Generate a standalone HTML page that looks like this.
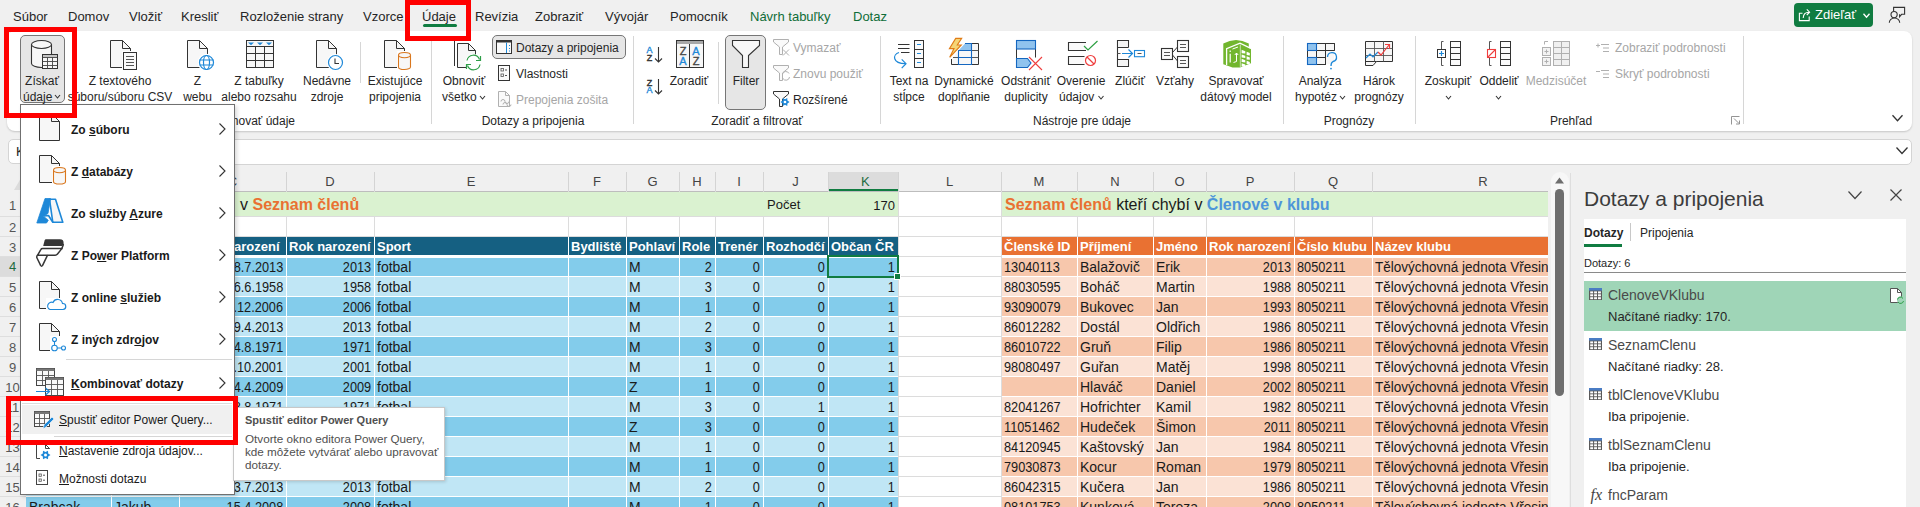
<!DOCTYPE html>
<html><head><meta charset="utf-8"><style>
html,body{margin:0;padding:0}
body{width:1920px;height:507px;overflow:hidden;position:relative;background:#f0f0f0;font-family:"Liberation Sans",sans-serif}
body>div{position:absolute}
.t{position:absolute;white-space:nowrap}
</style></head><body>
<div class="t" style="left:13px;top:8.0px;line-height:18px;font-size:13px;color:#262626;font-weight:400;">Súbor</div>
<div class="t" style="left:68px;top:8.0px;line-height:18px;font-size:13px;color:#262626;font-weight:400;">Domov</div>
<div class="t" style="left:129px;top:8.0px;line-height:18px;font-size:13px;color:#262626;font-weight:400;">Vložiť</div>
<div class="t" style="left:181px;top:8.0px;line-height:18px;font-size:13px;color:#262626;font-weight:400;">Kresliť</div>
<div class="t" style="left:240px;top:8.0px;line-height:18px;font-size:13px;color:#262626;font-weight:400;">Rozloženie strany</div>
<div class="t" style="left:363px;top:8.0px;line-height:18px;font-size:13px;color:#262626;font-weight:400;">Vzorce</div>
<div class="t" style="left:422px;top:8.0px;line-height:18px;font-size:13px;color:#262626;font-weight:400;">Údaje</div>
<div class="t" style="left:475px;top:8.0px;line-height:18px;font-size:13px;color:#262626;font-weight:400;">Revízia</div>
<div class="t" style="left:535px;top:8.0px;line-height:18px;font-size:13px;color:#262626;font-weight:400;">Zobraziť</div>
<div class="t" style="left:605px;top:8.0px;line-height:18px;font-size:13px;color:#262626;font-weight:400;">Vývojár</div>
<div class="t" style="left:670px;top:8.0px;line-height:18px;font-size:13px;color:#262626;font-weight:400;">Pomocník</div>
<div class="t" style="left:750px;top:8.0px;line-height:18px;font-size:13px;color:#0f6d38;font-weight:400;">Návrh tabuľky</div>
<div class="t" style="left:853px;top:8.0px;line-height:18px;font-size:13px;color:#0f6d38;font-weight:400;">Dotaz</div>
<div style="left:423px;top:24px;width:34px;height:3px;background:#107c41;border-radius:2px"></div>
<div style="left:1794px;top:3px;width:79px;height:24px;background:#107c41;border-radius:4px"></div>
<div class="t" style="left:1815px;top:6.0px;line-height:18px;font-size:13px;color:#fff;font-weight:400;">Zdieľať</div>
<div style="left:7px;top:31px;width:1905px;height:100px;background:#fff;border-radius:8px;box-shadow:0 1px 2px rgba(0,0,0,.18)"></div>
<div style="left:20px;top:35px;width:45px;height:68px;background:#e6e6e6;border:1px solid #767676;border-radius:5px;box-sizing:border-box"></div>
<div class="t" style="left:-258px;width:600px;text-align:center;top:73.0px;line-height:16px;font-size:12px;color:#262626;font-weight:400;">Získať</div>
<div class="t" style="left:23px;top:89.0px;line-height:16px;font-size:12px;color:#262626;font-weight:400;">údaje</div>
<div class="t" style="left:-180px;width:600px;text-align:center;top:73.0px;line-height:16px;font-size:12px;color:#262626;font-weight:400;">Z textového</div>
<div class="t" style="left:-180px;width:600px;text-align:center;top:89.0px;line-height:16px;font-size:12px;color:#262626;font-weight:400;">súboru/súboru CSV</div>
<div class="t" style="left:-102.5px;width:600px;text-align:center;top:73.0px;line-height:16px;font-size:12px;color:#262626;font-weight:400;">Z</div>
<div class="t" style="left:-102.5px;width:600px;text-align:center;top:89.0px;line-height:16px;font-size:12px;color:#262626;font-weight:400;">webu</div>
<div class="t" style="left:-41px;width:600px;text-align:center;top:73.0px;line-height:16px;font-size:12px;color:#262626;font-weight:400;">Z tabuľky</div>
<div class="t" style="left:-41px;width:600px;text-align:center;top:89.0px;line-height:16px;font-size:12px;color:#262626;font-weight:400;">alebo rozsahu</div>
<div class="t" style="left:27px;width:600px;text-align:center;top:73.0px;line-height:16px;font-size:12px;color:#262626;font-weight:400;">Nedávne</div>
<div class="t" style="left:27px;width:600px;text-align:center;top:89.0px;line-height:16px;font-size:12px;color:#262626;font-weight:400;">zdroje</div>
<div class="t" style="left:95px;width:600px;text-align:center;top:73.0px;line-height:16px;font-size:12px;color:#262626;font-weight:400;">Existujúce</div>
<div class="t" style="left:95px;width:600px;text-align:center;top:89.0px;line-height:16px;font-size:12px;color:#262626;font-weight:400;">pripojenia</div>
<div class="t" style="left:164px;width:600px;text-align:center;top:73.0px;line-height:16px;font-size:12px;color:#262626;font-weight:400;">Obnoviť</div>
<div class="t" style="left:442px;top:89.0px;line-height:16px;font-size:12px;color:#262626;font-weight:400;">všetko</div>
<div class="t" style="right:1625px;top:113.0px;line-height:16px;font-size:12px;color:#262626;font-weight:400;">Získať a transformovať údaje</div>
<div style="left:360px;top:42px;width:1px;height:41px;background:#d6d6d6"></div>
<div style="left:431px;top:41px;width:1px;height:83px;background:#d6d6d6"></div>
<div style="left:492px;top:35px;width:134px;height:24px;background:#e6e6e6;border:1px solid #767676;border-radius:5px;box-sizing:border-box"></div>
<div class="t" style="left:516px;top:40.0px;line-height:16px;font-size:12px;color:#262626;font-weight:400;">Dotazy a pripojenia</div>
<div class="t" style="left:516px;top:66.0px;line-height:16px;font-size:12px;color:#262626;font-weight:400;">Vlastnosti</div>
<div class="t" style="left:516px;top:92.0px;line-height:16px;font-size:12px;color:#a6a6a6;font-weight:400;">Prepojenia zošita</div>
<div class="t" style="left:233px;width:600px;text-align:center;top:113.0px;line-height:16px;font-size:12px;color:#262626;font-weight:400;">Dotazy a pripojenia</div>
<div style="left:633px;top:36px;width:1px;height:88px;background:#d6d6d6"></div>
<div class="t" style="left:389px;width:600px;text-align:center;top:73.0px;line-height:16px;font-size:12px;color:#262626;font-weight:400;">Zoradiť</div>
<div style="left:718px;top:42px;width:1px;height:62px;background:#d6d6d6"></div>
<div style="left:725px;top:35px;width:41px;height:75px;background:#e6e6e6;border:1px solid #767676;border-radius:5px;box-sizing:border-box"></div>
<div class="t" style="left:446px;width:600px;text-align:center;top:73.0px;line-height:16px;font-size:12px;color:#262626;font-weight:400;">Filter</div>
<div class="t" style="left:793px;top:40.0px;line-height:16px;font-size:12px;color:#a6a6a6;font-weight:400;">Vymazať</div>
<div class="t" style="left:793px;top:66.0px;line-height:16px;font-size:12px;color:#a6a6a6;font-weight:400;">Znovu použiť</div>
<div class="t" style="left:793px;top:92.0px;line-height:16px;font-size:12px;color:#262626;font-weight:400;">Rozšírené</div>
<div class="t" style="left:457px;width:600px;text-align:center;top:113.0px;line-height:16px;font-size:12px;color:#262626;font-weight:400;">Zoradiť a filtrovať</div>
<div style="left:880px;top:36px;width:1px;height:88px;background:#d6d6d6"></div>
<div class="t" style="left:609px;width:600px;text-align:center;top:73.0px;line-height:16px;font-size:12px;color:#262626;font-weight:400;">Text na</div>
<div class="t" style="left:609px;width:600px;text-align:center;top:89.0px;line-height:16px;font-size:12px;color:#262626;font-weight:400;">stĺpce</div>
<div class="t" style="left:664px;width:600px;text-align:center;top:73.0px;line-height:16px;font-size:12px;color:#262626;font-weight:400;">Dynamické</div>
<div class="t" style="left:664px;width:600px;text-align:center;top:89.0px;line-height:16px;font-size:12px;color:#262626;font-weight:400;">doplňanie</div>
<div class="t" style="left:726px;width:600px;text-align:center;top:73.0px;line-height:16px;font-size:12px;color:#262626;font-weight:400;">Odstrániť</div>
<div class="t" style="left:726px;width:600px;text-align:center;top:89.0px;line-height:16px;font-size:12px;color:#262626;font-weight:400;">duplicity</div>
<div class="t" style="left:781px;width:600px;text-align:center;top:73.0px;line-height:16px;font-size:12px;color:#262626;font-weight:400;">Overenie</div>
<div class="t" style="left:1059px;top:89.0px;line-height:16px;font-size:12px;color:#262626;font-weight:400;">údajov</div>
<div class="t" style="left:830px;width:600px;text-align:center;top:73.0px;line-height:16px;font-size:12px;color:#262626;font-weight:400;">Zlúčiť</div>
<div class="t" style="left:875px;width:600px;text-align:center;top:73.0px;line-height:16px;font-size:12px;color:#262626;font-weight:400;">Vzťahy</div>
<div class="t" style="left:936px;width:600px;text-align:center;top:73.0px;line-height:16px;font-size:12px;color:#262626;font-weight:400;">Spravovať</div>
<div class="t" style="left:936px;width:600px;text-align:center;top:89.0px;line-height:16px;font-size:12px;color:#262626;font-weight:400;">dátový model</div>
<div class="t" style="left:782px;width:600px;text-align:center;top:113.0px;line-height:16px;font-size:12px;color:#262626;font-weight:400;">Nástroje pre údaje</div>
<div style="left:1283px;top:36px;width:1px;height:88px;background:#d6d6d6"></div>
<div class="t" style="left:1020px;width:600px;text-align:center;top:73.0px;line-height:16px;font-size:12px;color:#262626;font-weight:400;">Analýza</div>
<div class="t" style="left:1295px;top:89.0px;line-height:16px;font-size:12px;color:#262626;font-weight:400;">hypotéz</div>
<div class="t" style="left:1079px;width:600px;text-align:center;top:73.0px;line-height:16px;font-size:12px;color:#262626;font-weight:400;">Hárok</div>
<div class="t" style="left:1079px;width:600px;text-align:center;top:89.0px;line-height:16px;font-size:12px;color:#262626;font-weight:400;">prognózy</div>
<div class="t" style="left:1049px;width:600px;text-align:center;top:113.0px;line-height:16px;font-size:12px;color:#262626;font-weight:400;">Prognózy</div>
<div style="left:1415px;top:36px;width:1px;height:88px;background:#d6d6d6"></div>
<div class="t" style="left:1148px;width:600px;text-align:center;top:73.0px;line-height:16px;font-size:12px;color:#262626;font-weight:400;">Zoskupiť</div>
<div class="t" style="left:1199px;width:600px;text-align:center;top:73.0px;line-height:16px;font-size:12px;color:#262626;font-weight:400;">Oddeliť</div>
<div class="t" style="left:1256px;width:600px;text-align:center;top:73.0px;line-height:16px;font-size:12px;color:#a6a6a6;font-weight:400;">Medzisúčet</div>
<div class="t" style="left:1615px;top:40.0px;line-height:16px;font-size:12px;color:#a6a6a6;font-weight:400;">Zobraziť podrobnosti</div>
<div class="t" style="left:1615px;top:66.0px;line-height:16px;font-size:12px;color:#a6a6a6;font-weight:400;">Skryť podrobnosti</div>
<div class="t" style="left:1271px;width:600px;text-align:center;top:113.0px;line-height:16px;font-size:12px;color:#262626;font-weight:400;">Prehľad</div>
<div style="left:1743px;top:36px;width:1px;height:88px;background:#d6d6d6"></div>
<svg style="position:absolute;left:0;top:0" width="1920" height="507" viewBox="0 0 1920 507" fill="none"><path d="M31.5 44.5V63.5A10.0 4 0 0 0 51.5 63.5V44.5" fill="#f7f7f7" stroke="#333333" stroke-width="1.1"/><ellipse cx="41.5" cy="44.5" rx="10.0" ry="4" fill="#f7f7f7" stroke="#333333" stroke-width="1.1"/><rect x="42" y="54" width="16" height="15" fill="#e6e6e6"/><rect x="42.5" y="54.5" width="15" height="14" fill="#f7f7f7" stroke="#333333"/><rect x="43" y="55" width="14" height="2.5" fill="#c4c4c4"/><path d="M42.5 57.5H57.5M42.5 61.5H57.5M42.5 65.5H57.5M47.5 57.5V68.5M52.5 57.5V68.5" stroke="#444" stroke-width=".9"/><path d="M110.5 40.5H122.5L130.5 48.5V67.5H110.5Z" fill="#f7f7f7" stroke="#333333" stroke-width="1" stroke-linejoin="miter"/><path d="M122.5 40.5V48.5H130.5" stroke="#333333" stroke-width="1"/><rect x="122" y="51" width="16" height="20" fill="#fff"/><rect x="123.5" y="52.5" width="13" height="17" fill="#fafafa" stroke="#333333"/><path d="M126 56.5H134M126 59.5H134M126 62.5H134M126 65.5H134" stroke="#555"/><path d="M187.5 40.5H199.5L207.5 48.5V67.5H187.5Z" fill="#f7f7f7" stroke="#333333" stroke-width="1" stroke-linejoin="miter"/><path d="M199.5 40.5V48.5H207.5" stroke="#333333" stroke-width="1"/><circle cx="206.5" cy="62.5" r="8.8" fill="#fff"/><circle cx="206.5" cy="62.5" r="7" fill="none" stroke="#1e88d8" stroke-width="1.2"/><ellipse cx="206.5" cy="62.5" rx="3" ry="7" fill="none" stroke="#1e88d8" stroke-width="1.2"/><path d="M199.5 60H213.5M199.5 65H213.5" stroke="#1e88d8" stroke-width="1.2"/><rect x="246.5" y="40.5" width="27" height="27" fill="#f7f7f7" stroke="#333333"/><path d="M246.5 46.5H273.5M246.5 53.5H273.5M246.5 60.5H273.5M255.5 46.5V67.5M264.5 46.5V67.5" stroke="#333333"/><path d="M248 42.5H254L251 45.3Z" fill="#1e88d8"/><path d="M257 42.5H263L260 45.3Z" fill="#1e88d8"/><path d="M266 42.5H272L269 45.3Z" fill="#1e88d8"/><path d="M316.5 40.5H328.5L336.5 48.5V67.5H316.5Z" fill="#f7f7f7" stroke="#333333" stroke-width="1" stroke-linejoin="miter"/><path d="M328.5 40.5V48.5H336.5" stroke="#333333" stroke-width="1"/><circle cx="335.5" cy="62.5" r="8.5" fill="#fff"/><circle cx="335.5" cy="62.5" r="7" fill="#fff" stroke="#1e88d8" stroke-width="1.2"/><path d="M335 58.5V63.5H339" stroke="#333333" stroke-width="1.1" fill="none"/><path d="M384.5 40.5H396.5L404.5 48.5V67.5H384.5Z" fill="#f7f7f7" stroke="#333333" stroke-width="1" stroke-linejoin="miter"/><path d="M396.5 40.5V48.5H404.5" stroke="#333333" stroke-width="1"/><rect x="397" y="51" width="15" height="20" fill="#fff"/><path d="M398.5 55.1V66.9A6.0 2.6 0 0 0 410.5 66.9V55.1" fill="#f7f7f7" stroke="#d9771e" stroke-width="1.1"/><ellipse cx="404.5" cy="55.1" rx="6.0" ry="2.6" fill="#f7f7f7" stroke="#d9771e" stroke-width="1.1"/><path d="M454.5 41V66" stroke="#333333"/><path d="M457.5 43.5H468.5L475.5 50.5V67.5H457.5Z" fill="#f7f7f7" stroke="#333333" stroke-width="1" stroke-linejoin="miter"/><path d="M468.5 43.5V50.5H475.5" stroke="#333333" stroke-width="1"/><circle cx="473.5" cy="62.5" r="8.5" fill="#fff"/><path d="M467 60.5A6.5 6.5 0 0 1 479.5 59.5M480 64.5A6.5 6.5 0 0 1 467.5 65.5" stroke="#2e9e48" stroke-width="1.2" fill="none"/><path d="M480.5 56V60.5H476" stroke="#2e9e48" stroke-width="1.2" fill="none"/><path d="M466.5 69V64.5H471" stroke="#2e9e48" stroke-width="1.2" fill="none"/><rect x="496.5" y="40.5" width="15" height="13" fill="#fafafa" stroke="#333333"/><rect x="496.5" y="40.5" width="15" height="2" fill="#333333"/><path d="M506.5 42.5V53" stroke="#1e88d8"/><path d="M509 45.5H510M509 48.5H510M509 51H510" stroke="#1e88d8"/><rect x="498.5" y="65.5" width="11" height="15" fill="#fafafa" stroke="#333333"/><rect x="501" y="68.5" width="2.5" height="2.5" fill="none" stroke="#555" stroke-width=".8"/><rect x="501" y="74" width="2.5" height="2.5" fill="none" stroke="#555" stroke-width=".8"/><path d="M505 70H507M505 75.5H507" stroke="#555"/><path d="M498.5 91.5H505.5L509.5 95.5V106.5H498.5Z" fill="#fafafa" stroke="#b0b0b0" stroke-width="1" stroke-linejoin="miter"/><path d="M505.5 91.5V95.5H509.5" stroke="#b0b0b0" stroke-width="1"/><path d="M501 101.5A2 2 0 0 1 505 101.5A2 2 0 0 0 509 101.5M503 104.5A2 2 0 0 1 507 104.5A2 2 0 0 0 511 104.5" stroke="#b0b0b0" fill="none"/><text x="649.5" y="53.3" font-family="Liberation Sans" font-size="9" font-weight="400" fill="#1e88d8" stroke="#1e88d8" stroke-width=".35" text-anchor="middle">A</text><text x="649.5" y="60.5" font-family="Liberation Sans" font-size="9" font-weight="400" fill="#333" stroke="#333" stroke-width=".35" text-anchor="middle">Z</text><path d="M658.5 47V62M655 58.5L658.5 62L662 58.5" stroke="#333333" stroke-width="1.1" fill="none"/><text x="649.5" y="85.5" font-family="Liberation Sans" font-size="9" font-weight="400" fill="#333" stroke="#333" stroke-width=".35" text-anchor="middle">Z</text><text x="649.5" y="93.3" font-family="Liberation Sans" font-size="9" font-weight="400" fill="#1e88d8" stroke="#1e88d8" stroke-width=".35" text-anchor="middle">A</text><path d="M658.5 79V94M655 90.5L658.5 94L662 90.5" stroke="#333333" stroke-width="1.1" fill="none"/><rect x="676.5" y="40.5" width="27" height="27" fill="#f7f7f7" stroke="#333333"/><rect x="677" y="41" width="26" height="3" fill="#a8a8a8"/><path d="M689.5 44V67.5" stroke="#333333"/><text x="683" y="54.5" font-family="Liberation Sans" font-size="11" font-weight="400" fill="#444" stroke="#444" stroke-width=".35" text-anchor="middle">Z</text><text x="683" y="64.5" font-family="Liberation Sans" font-size="11" font-weight="400" fill="#1e88d8" stroke="#1e88d8" stroke-width=".35" text-anchor="middle">A</text><text x="696" y="54.5" font-family="Liberation Sans" font-size="11" font-weight="400" fill="#1e88d8" stroke="#1e88d8" stroke-width=".35" text-anchor="middle">A</text><text x="696" y="64.5" font-family="Liberation Sans" font-size="11" font-weight="400" fill="#444" stroke="#444" stroke-width=".35" text-anchor="middle">Z</text><path d="M732.5 40.5H759.5V45.5L748.5 55.5V67.5H742.5V55.5L732.5 45.5Z" fill="#f7f7f7" stroke="#333333" stroke-width="1.1"/><path d="M773.5 39.5H788.5V42.0L782.5 47.0V54.5H779.5V47.0L773.5 42.0Z" fill="#fafafa" stroke="#b0b0b0" stroke-width="1"/><path d="M783 49.5L789 55.5M789 49.5L783 55.5" stroke="#b0b0b0"/><path d="M773.5 65.5H788.5V68.0L782.5 73.0V80.5H779.5V73.0L773.5 68.0Z" fill="#fafafa" stroke="#b0b0b0" stroke-width="1"/><path d="M782.5 74A3.5 3.5 0 0 1 789 73.5M789.5 77A3.5 3.5 0 0 1 783 78.5" stroke="#b0b0b0" fill="none"/><path d="M773.5 91.5H788.5V94.0L782.5 99.0V106.5H779.5V99.0L773.5 94.0Z" fill="#fafafa" stroke="#333333" stroke-width="1"/><polygon points="789.50,102.00 787.42,103.39 787.25,105.90 785.00,104.79 782.75,105.90 782.58,103.39 780.50,102.00 782.58,100.61 782.75,98.10 785.00,99.21 787.25,98.10 787.42,100.61" fill="#1e88d8"/><circle cx="785" cy="102" r="1.35" fill="#fff"/><path d="M898 44.5H909.5M898 48.5H909.5M901 52.5H909.5" stroke="#333333"/><rect x="914.5" y="40.5" width="9" height="27" fill="#fafafa" stroke="#333333"/><path d="M914.5 49.5H923.5M914.5 58.5H923.5" stroke="#333333"/><path d="M917 44.5H921M917 53.5H921M917 62.5H921" stroke="#1e88d8" stroke-width="1.1"/><path d="M899 52.5C892.5 54.5 892 63.5 905.5 63.7" stroke="#1e88d8" stroke-width="1.2" fill="none"/><path d="M901.7 59.3L906 63.7L901.7 68.2" stroke="#1e88d8" stroke-width="1.2" fill="none"/><path d="M965 43.5H978.5V64.5H951.5V59" stroke="#333333" fill="#f7f7f7"/><path d="M958.5 50.5H978.5M953 57.5H978.5" stroke="#555"/><path d="M958.5 50.5L965 43.5H971.5V50.5Z" fill="#90c3ee"/><path d="M965 43.5H971.5V64.5H958.5V50.5M958.5 50.5H971.5M958.5 57.5H971.5" stroke="#1567c0" stroke-width="1.1" fill="none"/><path d="M955.7 38.4H961.7L957.3 45H961.3L949.7 57.3L954 48.6H949.4Z" fill="#f5d576" stroke="#e07b16" stroke-width="1.1" stroke-linejoin="miter"/><path d="M1016.5 49V58M1035.5 49V57.5" stroke="#333333"/><rect x="1016.5" y="40.5" width="19" height="8.5" fill="#90c3ee" stroke="#1567c0" stroke-width="1.1"/><path d="M1016.5 58.5H1027.5L1031 63L1027.5 67.5H1016.5Z" fill="#90c3ee" stroke="#1567c0" stroke-width="1.1"/><path d="M1029 57L1042 70M1042 57L1029 70" stroke="#ef3e3e" stroke-width="1.1"/><path d="M1086 42.5H1068.5V50.5H1086" stroke="#333333" fill="#fafafa" stroke-width="1.1"/><path d="M1084 46L1088 50L1097.5 41" stroke="#2ea043" stroke-width="1.2" fill="none"/><path d="M1084.5 56.5H1068.5V64.5H1084.5" stroke="#333333" fill="#fafafa" stroke-width="1.1"/><circle cx="1090.5" cy="60.5" r="5" fill="#fff" stroke="#ef3e3e" stroke-width="1.2"/><path d="M1087 57L1094 64" stroke="#ef3e3e" stroke-width="1.2"/><path d="M1128.5 47.5V40.5H1117.5V66.5H1128.5V59.5H1117.5M1117.5 47.5H1128.5" stroke="#333333" fill="none" stroke-width="1.1"/><rect x="1118.2" y="41.2" width="9.6" height="5.6" fill="#f3f3f3"/><rect x="1118.2" y="60.2" width="9.6" height="5.6" fill="#f3f3f3"/><path d="M1117.5 53.5H1120.5" stroke="#555"/><path d="M1122 53.5H1132.5M1128.5 49.5L1132.5 53.5L1128.5 57.5" stroke="#1e88d8" stroke-width="1.2" fill="none"/><rect x="1134.5" y="50.5" width="10" height="6.2" fill="#fff" stroke="#1e88d8" stroke-width="1.1"/><path d="M1137.5 53.5H1141.5" stroke="#555"/><rect x="1161.5" y="48.5" width="11" height="11" fill="#fafafa" stroke="#333333" stroke-width="1.1"/><path d="M1164.0 52.5H1170.0M1164.0 55.5H1170.0" stroke="#555"/><rect x="1177.5" y="40.5" width="11" height="11" fill="#fafafa" stroke="#333333" stroke-width="1.1"/><path d="M1180.0 44.5H1186.0M1180.0 47.5H1186.0" stroke="#555"/><rect x="1177.5" y="56.5" width="11" height="11" fill="#fafafa" stroke="#333333" stroke-width="1.1"/><path d="M1180.0 60.5H1186.0M1180.0 63.5H1186.0" stroke="#555"/><path d="M1172.5 52.5L1177.5 47M1172.5 55L1177.5 61" stroke="#333333"/><path d="M1223.3 43.5Q1236 36.5 1248.8 43.5V47.8L1251 49V63.2L1240 67.5H1232.5L1223.3 64.2Z" fill="#72b62e"/><path d="M1226.6 65V48.6L1240 43.2L1250.8 48.4" stroke="#fff" stroke-width="1.3" fill="none"/><path d="M1240.3 44.5V67.3" stroke="#fff" stroke-width=".6"/><path d="M1241.6 49.81L1245.3 51.21V53.58L1241.6 53.21Z" fill="#fff"/><path d="M1241.6 54.41L1245.3 55.81V57.98L1241.6 57.61Z" fill="#fff"/><path d="M1241.6 58.81L1245.3 60.21V62.38L1241.6 62.01Z" fill="#fff"/><path d="M1241.6 63.21L1245.3 64.61V66.78L1241.6 66.41Z" fill="#fff"/><path d="M1246.6 51.71L1249.8 52.92V55.43L1246.6 55.11Z" fill="#fff"/><path d="M1246.6 56.31L1249.8 57.52V59.83L1246.6 59.51Z" fill="#fff"/><path d="M1246.6 60.71L1249.8 61.92V64.23L1246.6 63.91Z" fill="#fff"/><path d="M1246.6 65.11L1249.8 66.32V68.63L1246.6 68.31Z" fill="#fff"/><path d="M1230.2 50.5V52M1230.2 53.8V62.5" stroke="#fff" stroke-width="1.2"/><path d="M1236.5 53V61.5L1233.5 62.5M1234.8 55L1236.5 53L1238.2 55M1232.5 49L1238 47" stroke="#fff" stroke-width="1" fill="none"/><path d="M1307.5 43.5H1334.5V50.5M1307.5 43.5V64.5H1326" stroke="#333333" fill="none"/><rect x="1308" y="44" width="26" height="20" fill="#f7f7f7"/><path d="M1307.5 50.5H1334.5M1307.5 57.5H1326M1316.5 43.5V64.5M1325.5 43.5V64.5M1334.5 43.5V50.5M1307.5 43.5H1334.5M1307.5 64.5H1326M1307.5 43.5V64.5" stroke="#333333"/><rect x="1307.5" y="43.5" width="9" height="7" fill="#90c3ee" stroke="#1567c0" stroke-width="1.1"/><rect x="1307.5" y="57.5" width="9" height="7" fill="#90c3ee" stroke="#1567c0" stroke-width="1.1"/><path d="M1327.5 57A4.5 4.5 0 1 1 1333 61.5Q1331 62.5 1331 66" stroke="#1e88d8" stroke-width="1.3" fill="none"/><circle cx="1331" cy="68.6" r=".9" fill="#1e88d8"/><path d="M1365.5 41.5H1392.5V61.5H1376.5L1373 65.5H1365.5Z" fill="#f7f7f7" stroke="#333333"/><path d="M1365.5 61.5H1376.5" stroke="#333333"/><path d="M1365.5 48.5H1392.5M1365.5 55.5H1392.5M1374.5 41.5V61.5M1383.5 41.5V61.5" stroke="#555" stroke-width=".9"/><path d="M1366 58L1370 54L1373 57L1378 52" stroke="#1e88d8" stroke-width="1.2" fill="none"/><path d="M1378 52L1381 55L1389 45M1385 44.5H1389.5V49" stroke="#ef3e3e" stroke-width="1.2" fill="none"/><path d="M1443.5 41.5H1441.5V49M1441.5 57.5V65.5H1443.5" stroke="#555" fill="none"/><rect x="1450.5" y="41.5" width="10" height="24" fill="#fafafa" stroke="#333333"/><path d="M1450.5 47.5H1460.5M1450.5 53.5H1460.5M1450.5 59.5H1460.5" stroke="#333333"/><rect x="1437.5" y="49.5" width="8" height="8" fill="#fff" stroke="#333333"/><path d="M1441.5 51V56M1439 53.5H1444" stroke="#1e88d8" stroke-width="1.2"/><path d="M1491.5 41.5H1489.5V49M1489.5 57.5V65.5H1491.5" stroke="#555" fill="none"/><rect x="1500.5" y="41.5" width="10" height="24" fill="#fafafa" stroke="#333333"/><path d="M1500.5 47.5H1510.5M1500.5 53.5H1510.5M1500.5 59.5H1510.5" stroke="#333333"/><rect x="1487.5" y="49.5" width="8" height="8" fill="#fff" stroke="#ef3e3e" stroke-width="1.1"/><path d="M1488 57L1495 50" stroke="#ef3e3e" stroke-width="1.1"/><path d="M1544.5 44.5V41.5H1548" stroke="#b0b0b0" fill="none"/><rect x="1542.5" y="47.5" width="8" height="8" fill="#f3f3f3" stroke="#b0b0b0"/><rect x="1542.5" y="57.5" width="8" height="8" fill="#f3f3f3" stroke="#b0b0b0"/><path d="M1546.5 49.5V53.5M1544.5 51.5H1548.5M1546.5 59.5V63.5M1544.5 61.5H1548.5" stroke="#b0b0b0"/><rect x="1553.5" y="41.5" width="16" height="24" fill="#f0f0f0" stroke="#b0b0b0"/><path d="M1553.5 47.5H1569.5M1553.5 53.5H1569.5M1553.5 59.5H1569.5M1561.5 41.5V65.5" stroke="#b0b0b0"/><path d="M1596 45.5H1600M1598 43.5V47.5M1601 44.5H1609M1603 48H1609M1603 51.5H1609" stroke="#b0b0b0"/><path d="M1596 71.5H1600M1601 70.5H1609M1603 74H1609M1603 77.5H1609" stroke="#b0b0b0"/><path d="M1731.5 124.5V116.5H1739.5M1734 118.5L1739 123.5M1739.5 120.5V124H1736" stroke="#888" fill="none" stroke-width=".9"/><path d="M55.0 95.0L57.5 98.0L60.0 95.0" stroke="#333333" stroke-width="1.1" fill="none"/><path d="M480.0 96.0L482.5 99.0L485.0 96.0" stroke="#333333" stroke-width="1.1" fill="none"/><path d="M1098.5 96.0L1101 99.0L1103.5 96.0" stroke="#333333" stroke-width="1.1" fill="none"/><path d="M1340.0 96.0L1342.5 99.0L1345.0 96.0" stroke="#333333" stroke-width="1.1" fill="none"/><path d="M1446.0 96.0L1448.5 99.0L1451.0 96.0" stroke="#333333" stroke-width="1.1" fill="none"/><path d="M1496.0 96.0L1498.5 99.0L1501.0 96.0" stroke="#333333" stroke-width="1.1" fill="none"/><path d="M1892.5 115.25L1897.5 120.75L1902.5 115.25" stroke="#333333" stroke-width="1.3" fill="none"/><path d="M1802.5 13.2H1799.4V20.6H1809.2V16.6" stroke="#fff" stroke-width="1.1" fill="none"/><path d="M1803.2 18Q1803.5 12 1809.3 12.2M1806.8 9.3L1809.6 12.2L1806.8 15" stroke="#fff" stroke-width="1.1" fill="none"/><path d="M1863.5 13.75L1866.5 17.25L1869.5 13.75" stroke="#fff" stroke-width="1.3" fill="none"/><path d="M1893.6 11.5V7.4H1904.6V14.3H1901.6L1899.6 16.8V14.3" stroke="#333333" stroke-width="1.1" fill="none"/><circle cx="1894.1" cy="14.6" r="3.1" fill="#f0f0f0" stroke="#333333" stroke-width="1.1"/><path d="M1889.3 22.8A5.2 4.8 0 0 1 1899.7 22.8" stroke="#333333" stroke-width="1.1" fill="none"/></svg>
<div style="left:8px;top:139px;width:90px;height:25px;background:#fff;border:1px solid #d4d4d4;border-radius:5px;box-sizing:border-box"></div>
<div class="t" style="left:16px;top:143.0px;line-height:18px;font-size:13px;color:#262626;font-weight:400;">K4</div>
<div style="left:200px;top:139px;width:1712px;height:26px;background:#fff;border:1px solid #d4d4d4;border-radius:5px;box-sizing:border-box"></div>
<div style="left:26px;top:191px;width:1522px;height:316px;background:#fff"></div>
<div style="left:0px;top:165px;width:1548px;height:26px;background:#f0f0f0"></div>
<div style="left:0px;top:191px;width:1548px;height:1px;background:#bdbdbd"></div>
<div class="t" style="left:-231.5px;width:600px;text-align:center;top:173.0px;line-height:18px;font-size:13px;color:#444;font-weight:400;">A</div>
<div style="left:111px;top:172px;width:1px;height:19px;background:#d4d4d4"></div>
<div class="t" style="left:-155.0px;width:600px;text-align:center;top:173.0px;line-height:18px;font-size:13px;color:#444;font-weight:400;">B</div>
<div style="left:179px;top:172px;width:1px;height:19px;background:#d4d4d4"></div>
<div class="t" style="left:-67.5px;width:600px;text-align:center;top:173.0px;line-height:18px;font-size:13px;color:#444;font-weight:400;">C</div>
<div style="left:286px;top:172px;width:1px;height:19px;background:#d4d4d4"></div>
<div class="t" style="left:30.0px;width:600px;text-align:center;top:173.0px;line-height:18px;font-size:13px;color:#444;font-weight:400;">D</div>
<div style="left:374px;top:172px;width:1px;height:19px;background:#d4d4d4"></div>
<div class="t" style="left:171.0px;width:600px;text-align:center;top:173.0px;line-height:18px;font-size:13px;color:#444;font-weight:400;">E</div>
<div style="left:568px;top:172px;width:1px;height:19px;background:#d4d4d4"></div>
<div class="t" style="left:297.0px;width:600px;text-align:center;top:173.0px;line-height:18px;font-size:13px;color:#444;font-weight:400;">F</div>
<div style="left:626px;top:172px;width:1px;height:19px;background:#d4d4d4"></div>
<div class="t" style="left:352.5px;width:600px;text-align:center;top:173.0px;line-height:18px;font-size:13px;color:#444;font-weight:400;">G</div>
<div style="left:679px;top:172px;width:1px;height:19px;background:#d4d4d4"></div>
<div class="t" style="left:397.0px;width:600px;text-align:center;top:173.0px;line-height:18px;font-size:13px;color:#444;font-weight:400;">H</div>
<div style="left:715px;top:172px;width:1px;height:19px;background:#d4d4d4"></div>
<div class="t" style="left:439.0px;width:600px;text-align:center;top:173.0px;line-height:18px;font-size:13px;color:#444;font-weight:400;">I</div>
<div style="left:763px;top:172px;width:1px;height:19px;background:#d4d4d4"></div>
<div class="t" style="left:495.5px;width:600px;text-align:center;top:173.0px;line-height:18px;font-size:13px;color:#444;font-weight:400;">J</div>
<div style="left:828px;top:172px;width:1px;height:19px;background:#d4d4d4"></div>
<div style="left:829px;top:172px;width:69px;height:19px;background:#dcdcdc"></div>
<div style="left:829px;top:189px;width:69px;height:2px;background:#107c41"></div>
<div class="t" style="left:861px;top:173.0px;line-height:18px;font-size:13px;color:#1d6b3f;font-weight:400;">K</div>
<div style="left:898px;top:172px;width:1px;height:19px;background:#d4d4d4"></div>
<div class="t" style="left:649.5px;width:600px;text-align:center;top:173.0px;line-height:18px;font-size:13px;color:#444;font-weight:400;">L</div>
<div style="left:1001px;top:172px;width:1px;height:19px;background:#d4d4d4"></div>
<div class="t" style="left:739.0px;width:600px;text-align:center;top:173.0px;line-height:18px;font-size:13px;color:#444;font-weight:400;">M</div>
<div style="left:1077px;top:172px;width:1px;height:19px;background:#d4d4d4"></div>
<div class="t" style="left:815.0px;width:600px;text-align:center;top:173.0px;line-height:18px;font-size:13px;color:#444;font-weight:400;">N</div>
<div style="left:1153px;top:172px;width:1px;height:19px;background:#d4d4d4"></div>
<div class="t" style="left:879.5px;width:600px;text-align:center;top:173.0px;line-height:18px;font-size:13px;color:#444;font-weight:400;">O</div>
<div style="left:1206px;top:172px;width:1px;height:19px;background:#d4d4d4"></div>
<div class="t" style="left:950.0px;width:600px;text-align:center;top:173.0px;line-height:18px;font-size:13px;color:#444;font-weight:400;">P</div>
<div style="left:1294px;top:172px;width:1px;height:19px;background:#d4d4d4"></div>
<div class="t" style="left:1033.0px;width:600px;text-align:center;top:173.0px;line-height:18px;font-size:13px;color:#444;font-weight:400;">Q</div>
<div style="left:1372px;top:172px;width:1px;height:19px;background:#d4d4d4"></div>
<div class="t" style="left:1183px;width:600px;text-align:center;top:173.0px;line-height:18px;font-size:13px;color:#444;font-weight:400;">R</div>
<div style="left:14px;top:178px;width:7px;height:12px;background:#dcdcdc;clip-path:polygon(100% 0,100% 100%,0 100%)"></div>
<div style="left:0px;top:191px;width:26px;height:316px;background:#f0f0f0"></div>
<div style="left:0px;top:216px;width:26px;height:1px;background:#dedede"></div>
<div class="t" style="left:-287.5px;width:600px;text-align:center;top:196.5px;line-height:18px;font-size:13px;color:#555;font-weight:400;">1</div>
<div style="left:0px;top:236px;width:26px;height:1px;background:#dedede"></div>
<div class="t" style="left:-287.5px;width:600px;text-align:center;top:218.5px;line-height:18px;font-size:13px;color:#555;font-weight:400;">2</div>
<div style="left:0px;top:256px;width:26px;height:1px;background:#dedede"></div>
<div class="t" style="left:-287.5px;width:600px;text-align:center;top:238.5px;line-height:18px;font-size:13px;color:#555;font-weight:400;">3</div>
<div style="left:0px;top:276px;width:26px;height:1px;background:#dedede"></div>
<div style="left:0px;top:257px;width:25px;height:19px;background:#dcdcdc"></div>
<div style="left:24px;top:257px;width:2px;height:19px;background:#107c41"></div>
<div class="t" style="left:-287.5px;width:600px;text-align:center;top:258.0px;line-height:18px;font-size:13px;color:#1d6b3f;font-weight:400;">4</div>
<div style="left:0px;top:296px;width:26px;height:1px;background:#dedede"></div>
<div class="t" style="left:-287.5px;width:600px;text-align:center;top:278.5px;line-height:18px;font-size:13px;color:#555;font-weight:400;">5</div>
<div style="left:0px;top:316px;width:26px;height:1px;background:#dedede"></div>
<div class="t" style="left:-287.5px;width:600px;text-align:center;top:298.5px;line-height:18px;font-size:13px;color:#555;font-weight:400;">6</div>
<div style="left:0px;top:336px;width:26px;height:1px;background:#dedede"></div>
<div class="t" style="left:-287.5px;width:600px;text-align:center;top:318.5px;line-height:18px;font-size:13px;color:#555;font-weight:400;">7</div>
<div style="left:0px;top:356px;width:26px;height:1px;background:#dedede"></div>
<div class="t" style="left:-287.5px;width:600px;text-align:center;top:338.5px;line-height:18px;font-size:13px;color:#555;font-weight:400;">8</div>
<div style="left:0px;top:376px;width:26px;height:1px;background:#dedede"></div>
<div class="t" style="left:-287.5px;width:600px;text-align:center;top:358.5px;line-height:18px;font-size:13px;color:#555;font-weight:400;">9</div>
<div style="left:0px;top:396px;width:26px;height:1px;background:#dedede"></div>
<div class="t" style="left:-287.5px;width:600px;text-align:center;top:378.5px;line-height:18px;font-size:13px;color:#555;font-weight:400;">10</div>
<div style="left:0px;top:416px;width:26px;height:1px;background:#dedede"></div>
<div class="t" style="left:-287.5px;width:600px;text-align:center;top:398.5px;line-height:18px;font-size:13px;color:#555;font-weight:400;">11</div>
<div style="left:0px;top:436px;width:26px;height:1px;background:#dedede"></div>
<div class="t" style="left:-287.5px;width:600px;text-align:center;top:418.5px;line-height:18px;font-size:13px;color:#555;font-weight:400;">12</div>
<div style="left:0px;top:456px;width:26px;height:1px;background:#dedede"></div>
<div class="t" style="left:-287.5px;width:600px;text-align:center;top:438.5px;line-height:18px;font-size:13px;color:#555;font-weight:400;">13</div>
<div style="left:0px;top:476px;width:26px;height:1px;background:#dedede"></div>
<div class="t" style="left:-287.5px;width:600px;text-align:center;top:458.5px;line-height:18px;font-size:13px;color:#555;font-weight:400;">14</div>
<div style="left:0px;top:496px;width:26px;height:1px;background:#dedede"></div>
<div class="t" style="left:-287.5px;width:600px;text-align:center;top:478.5px;line-height:18px;font-size:13px;color:#555;font-weight:400;">15</div>
<div style="left:0px;top:516px;width:26px;height:1px;background:#dedede"></div>
<div class="t" style="left:-287.5px;width:600px;text-align:center;top:498.5px;line-height:18px;font-size:13px;color:#555;font-weight:400;">16</div>
<div style="left:26px;top:216px;width:1522px;height:1px;background:#dcdcdc"></div>
<div style="left:26px;top:236px;width:1522px;height:1px;background:#dcdcdc"></div>
<div style="left:26px;top:256px;width:1522px;height:1px;background:#dcdcdc"></div>
<div style="left:26px;top:276px;width:1522px;height:1px;background:#dcdcdc"></div>
<div style="left:26px;top:296px;width:1522px;height:1px;background:#dcdcdc"></div>
<div style="left:26px;top:316px;width:1522px;height:1px;background:#dcdcdc"></div>
<div style="left:26px;top:336px;width:1522px;height:1px;background:#dcdcdc"></div>
<div style="left:26px;top:356px;width:1522px;height:1px;background:#dcdcdc"></div>
<div style="left:26px;top:376px;width:1522px;height:1px;background:#dcdcdc"></div>
<div style="left:26px;top:396px;width:1522px;height:1px;background:#dcdcdc"></div>
<div style="left:26px;top:416px;width:1522px;height:1px;background:#dcdcdc"></div>
<div style="left:26px;top:436px;width:1522px;height:1px;background:#dcdcdc"></div>
<div style="left:26px;top:456px;width:1522px;height:1px;background:#dcdcdc"></div>
<div style="left:26px;top:476px;width:1522px;height:1px;background:#dcdcdc"></div>
<div style="left:26px;top:496px;width:1522px;height:1px;background:#dcdcdc"></div>
<div style="left:26px;top:516px;width:1522px;height:1px;background:#dcdcdc"></div>
<div style="left:111px;top:191px;width:1px;height:316px;background:#dcdcdc"></div>
<div style="left:179px;top:191px;width:1px;height:316px;background:#dcdcdc"></div>
<div style="left:286px;top:191px;width:1px;height:316px;background:#dcdcdc"></div>
<div style="left:374px;top:191px;width:1px;height:316px;background:#dcdcdc"></div>
<div style="left:568px;top:191px;width:1px;height:316px;background:#dcdcdc"></div>
<div style="left:626px;top:191px;width:1px;height:316px;background:#dcdcdc"></div>
<div style="left:679px;top:191px;width:1px;height:316px;background:#dcdcdc"></div>
<div style="left:715px;top:191px;width:1px;height:316px;background:#dcdcdc"></div>
<div style="left:763px;top:191px;width:1px;height:316px;background:#dcdcdc"></div>
<div style="left:828px;top:191px;width:1px;height:316px;background:#dcdcdc"></div>
<div style="left:898px;top:191px;width:1px;height:316px;background:#dcdcdc"></div>
<div style="left:1001px;top:191px;width:1px;height:316px;background:#dcdcdc"></div>
<div style="left:1077px;top:191px;width:1px;height:316px;background:#dcdcdc"></div>
<div style="left:1153px;top:191px;width:1px;height:316px;background:#dcdcdc"></div>
<div style="left:1206px;top:191px;width:1px;height:316px;background:#dcdcdc"></div>
<div style="left:1294px;top:191px;width:1px;height:316px;background:#dcdcdc"></div>
<div style="left:1372px;top:191px;width:1px;height:316px;background:#dcdcdc"></div>
<div style="left:26px;top:192px;width:872px;height:24px;background:#daf2d0"></div>
<div style="left:1002px;top:192px;width:546px;height:24px;background:#daf2d0"></div>
<div style="left:26px;top:237px;width:872px;height:18px;background:#156082"></div>
<div style="left:26px;top:255px;width:872px;height:2px;background:#fff"></div>
<div style="left:26px;top:258px;width:872px;height:18px;background:#83cceb"></div>
<div style="left:26px;top:276px;width:872px;height:1px;background:#fff"></div>
<div style="left:26px;top:277px;width:872px;height:19px;background:#c0e6f5"></div>
<div style="left:26px;top:296px;width:872px;height:1px;background:#fff"></div>
<div style="left:26px;top:297px;width:872px;height:19px;background:#83cceb"></div>
<div style="left:26px;top:316px;width:872px;height:1px;background:#fff"></div>
<div style="left:26px;top:317px;width:872px;height:19px;background:#c0e6f5"></div>
<div style="left:26px;top:336px;width:872px;height:1px;background:#fff"></div>
<div style="left:26px;top:337px;width:872px;height:19px;background:#83cceb"></div>
<div style="left:26px;top:356px;width:872px;height:1px;background:#fff"></div>
<div style="left:26px;top:357px;width:872px;height:19px;background:#c0e6f5"></div>
<div style="left:26px;top:376px;width:872px;height:1px;background:#fff"></div>
<div style="left:26px;top:377px;width:872px;height:19px;background:#83cceb"></div>
<div style="left:26px;top:396px;width:872px;height:1px;background:#fff"></div>
<div style="left:26px;top:397px;width:872px;height:19px;background:#c0e6f5"></div>
<div style="left:26px;top:416px;width:872px;height:1px;background:#fff"></div>
<div style="left:26px;top:417px;width:872px;height:19px;background:#83cceb"></div>
<div style="left:26px;top:436px;width:872px;height:1px;background:#fff"></div>
<div style="left:26px;top:437px;width:872px;height:19px;background:#c0e6f5"></div>
<div style="left:26px;top:456px;width:872px;height:1px;background:#fff"></div>
<div style="left:26px;top:457px;width:872px;height:19px;background:#83cceb"></div>
<div style="left:26px;top:476px;width:872px;height:1px;background:#fff"></div>
<div style="left:26px;top:477px;width:872px;height:19px;background:#c0e6f5"></div>
<div style="left:26px;top:496px;width:872px;height:1px;background:#fff"></div>
<div style="left:26px;top:497px;width:872px;height:19px;background:#83cceb"></div>
<div style="left:26px;top:516px;width:872px;height:1px;background:#fff"></div>
<div style="left:111px;top:237px;width:1px;height:270px;background:#fff"></div>
<div style="left:179px;top:237px;width:1px;height:270px;background:#fff"></div>
<div style="left:286px;top:237px;width:1px;height:270px;background:#fff"></div>
<div style="left:374px;top:237px;width:1px;height:270px;background:#fff"></div>
<div style="left:568px;top:237px;width:1px;height:270px;background:#fff"></div>
<div style="left:626px;top:237px;width:1px;height:270px;background:#fff"></div>
<div style="left:679px;top:237px;width:1px;height:270px;background:#fff"></div>
<div style="left:715px;top:237px;width:1px;height:270px;background:#fff"></div>
<div style="left:763px;top:237px;width:1px;height:270px;background:#fff"></div>
<div style="left:828px;top:237px;width:1px;height:270px;background:#fff"></div>
<div style="left:1002px;top:237px;width:546px;height:18px;background:#e97132"></div>
<div style="left:1002px;top:255px;width:546px;height:2px;background:#fff"></div>
<div style="left:1002px;top:258px;width:546px;height:18px;background:#f7c7ac"></div>
<div style="left:1002px;top:276px;width:546px;height:1px;background:#fff"></div>
<div style="left:1002px;top:277px;width:546px;height:19px;background:#fbe2d5"></div>
<div style="left:1002px;top:296px;width:546px;height:1px;background:#fff"></div>
<div style="left:1002px;top:297px;width:546px;height:19px;background:#f7c7ac"></div>
<div style="left:1002px;top:316px;width:546px;height:1px;background:#fff"></div>
<div style="left:1002px;top:317px;width:546px;height:19px;background:#fbe2d5"></div>
<div style="left:1002px;top:336px;width:546px;height:1px;background:#fff"></div>
<div style="left:1002px;top:337px;width:546px;height:19px;background:#f7c7ac"></div>
<div style="left:1002px;top:356px;width:546px;height:1px;background:#fff"></div>
<div style="left:1002px;top:357px;width:546px;height:19px;background:#fbe2d5"></div>
<div style="left:1002px;top:376px;width:546px;height:1px;background:#fff"></div>
<div style="left:1002px;top:377px;width:546px;height:19px;background:#f7c7ac"></div>
<div style="left:1002px;top:396px;width:546px;height:1px;background:#fff"></div>
<div style="left:1002px;top:397px;width:546px;height:19px;background:#fbe2d5"></div>
<div style="left:1002px;top:416px;width:546px;height:1px;background:#fff"></div>
<div style="left:1002px;top:417px;width:546px;height:19px;background:#f7c7ac"></div>
<div style="left:1002px;top:436px;width:546px;height:1px;background:#fff"></div>
<div style="left:1002px;top:437px;width:546px;height:19px;background:#fbe2d5"></div>
<div style="left:1002px;top:456px;width:546px;height:1px;background:#fff"></div>
<div style="left:1002px;top:457px;width:546px;height:19px;background:#f7c7ac"></div>
<div style="left:1002px;top:476px;width:546px;height:1px;background:#fff"></div>
<div style="left:1002px;top:477px;width:546px;height:19px;background:#fbe2d5"></div>
<div style="left:1002px;top:496px;width:546px;height:1px;background:#fff"></div>
<div style="left:1002px;top:497px;width:546px;height:19px;background:#f7c7ac"></div>
<div style="left:1002px;top:516px;width:546px;height:1px;background:#fff"></div>
<div style="left:1077px;top:237px;width:1px;height:270px;background:#fff"></div>
<div style="left:1153px;top:237px;width:1px;height:270px;background:#fff"></div>
<div style="left:1206px;top:237px;width:1px;height:270px;background:#fff"></div>
<div style="left:1294px;top:237px;width:1px;height:270px;background:#fff"></div>
<div style="left:1372px;top:237px;width:1px;height:270px;background:#fff"></div>
<div class="t" style="left:240px;top:194.0px;line-height:22px;font-size:16px;color:#262626;font-weight:400;"><span style="color:#1a1a1a">v </span><span style="color:#e97132;font-weight:700">Seznam členů</span></div>
<div class="t" style="left:767px;top:196.0px;line-height:18px;font-size:13px;color:#1a1a1a;font-weight:400;">Počet</div>
<div class="t" style="right:1025px;top:197.0px;line-height:18px;font-size:13px;color:#1a1a1a;font-weight:400;">170</div>
<div class="t" style="left:1005px;top:194.0px;line-height:22px;font-size:16px;color:#262626;font-weight:400;"><span style="color:#e97132;font-weight:700">Seznam členů</span><span style="color:#1a1a1a"> kteří chybí v </span><span style="color:#4e95d9;font-weight:700">Členové v klubu</span></div>
<div class="t" style="left:29px;top:237.5px;line-height:18px;font-size:13px;color:#fff;font-weight:700;">Příjmení</div>
<div class="t" style="left:114px;top:237.5px;line-height:18px;font-size:13px;color:#fff;font-weight:700;">Jméno</div>
<div class="t" style="left:182px;top:237.5px;line-height:18px;font-size:13px;color:#fff;font-weight:700;">Datum narození</div>
<div class="t" style="left:289px;top:237.5px;line-height:18px;font-size:13px;color:#fff;font-weight:700;">Rok narození</div>
<div class="t" style="left:377px;top:237.5px;line-height:18px;font-size:13px;color:#fff;font-weight:700;">Sport</div>
<div class="t" style="left:571px;top:237.5px;line-height:18px;font-size:13px;color:#fff;font-weight:700;">Bydliště</div>
<div class="t" style="left:629px;top:237.5px;line-height:18px;font-size:13px;color:#fff;font-weight:700;">Pohlaví</div>
<div class="t" style="left:682px;top:237.5px;line-height:18px;font-size:13px;color:#fff;font-weight:700;">Role</div>
<div class="t" style="left:718px;top:237.5px;line-height:18px;font-size:13px;color:#fff;font-weight:700;">Trenér</div>
<div class="t" style="left:766px;top:237.5px;line-height:18px;font-size:13px;color:#fff;font-weight:700;">Rozhodčí</div>
<div class="t" style="left:831px;top:237.5px;line-height:18px;font-size:13px;color:#fff;font-weight:700;">Občan ČR</div>
<div class="t" style="left:29px;top:257.7px;line-height:19px;font-size:14px;color:#1a1a1a;font-weight:400;">Brabec</div>
<div class="t" style="left:114px;top:257.7px;line-height:19px;font-size:14px;color:#1a1a1a;font-weight:400;">Jakub</div>
<div class="t" style="right:1637px;top:257.7px;line-height:19px;font-size:14px;color:#1a1a1a;font-weight:400;transform:scaleX(.91);transform-origin:right center;">18.7.2013</div>
<div class="t" style="right:1549px;top:257.7px;line-height:19px;font-size:14px;color:#1a1a1a;font-weight:400;transform:scaleX(.91);transform-origin:right center;">2013</div>
<div class="t" style="left:377px;top:257.7px;line-height:19px;font-size:14px;color:#1a1a1a;font-weight:400;">fotbal</div>
<div class="t" style="left:629px;top:257.7px;line-height:19px;font-size:14px;color:#1a1a1a;font-weight:400;">M</div>
<div class="t" style="right:1208px;top:257.7px;line-height:19px;font-size:14px;color:#1a1a1a;font-weight:400;transform:scaleX(.91);transform-origin:right center;">2</div>
<div class="t" style="right:1160px;top:257.7px;line-height:19px;font-size:14px;color:#1a1a1a;font-weight:400;transform:scaleX(.91);transform-origin:right center;">0</div>
<div class="t" style="right:1095px;top:257.7px;line-height:19px;font-size:14px;color:#1a1a1a;font-weight:400;transform:scaleX(.91);transform-origin:right center;">0</div>
<div class="t" style="right:1025px;top:257.7px;line-height:19px;font-size:14px;color:#1a1a1a;font-weight:400;transform:scaleX(.91);transform-origin:right center;">1</div>
<div class="t" style="left:29px;top:277.7px;line-height:19px;font-size:14px;color:#1a1a1a;font-weight:400;">Bartoš</div>
<div class="t" style="left:114px;top:277.7px;line-height:19px;font-size:14px;color:#1a1a1a;font-weight:400;">Petr</div>
<div class="t" style="right:1637px;top:277.7px;line-height:19px;font-size:14px;color:#1a1a1a;font-weight:400;transform:scaleX(.91);transform-origin:right center;">16.6.1958</div>
<div class="t" style="right:1549px;top:277.7px;line-height:19px;font-size:14px;color:#1a1a1a;font-weight:400;transform:scaleX(.91);transform-origin:right center;">1958</div>
<div class="t" style="left:377px;top:277.7px;line-height:19px;font-size:14px;color:#1a1a1a;font-weight:400;">fotbal</div>
<div class="t" style="left:629px;top:277.7px;line-height:19px;font-size:14px;color:#1a1a1a;font-weight:400;">M</div>
<div class="t" style="right:1208px;top:277.7px;line-height:19px;font-size:14px;color:#1a1a1a;font-weight:400;transform:scaleX(.91);transform-origin:right center;">3</div>
<div class="t" style="right:1160px;top:277.7px;line-height:19px;font-size:14px;color:#1a1a1a;font-weight:400;transform:scaleX(.91);transform-origin:right center;">0</div>
<div class="t" style="right:1095px;top:277.7px;line-height:19px;font-size:14px;color:#1a1a1a;font-weight:400;transform:scaleX(.91);transform-origin:right center;">0</div>
<div class="t" style="right:1025px;top:277.7px;line-height:19px;font-size:14px;color:#1a1a1a;font-weight:400;transform:scaleX(.91);transform-origin:right center;">1</div>
<div class="t" style="left:29px;top:297.7px;line-height:19px;font-size:14px;color:#1a1a1a;font-weight:400;">Bednář</div>
<div class="t" style="left:114px;top:297.7px;line-height:19px;font-size:14px;color:#1a1a1a;font-weight:400;">Jan</div>
<div class="t" style="right:1637px;top:297.7px;line-height:19px;font-size:14px;color:#1a1a1a;font-weight:400;transform:scaleX(.91);transform-origin:right center;">11.12.2006</div>
<div class="t" style="right:1549px;top:297.7px;line-height:19px;font-size:14px;color:#1a1a1a;font-weight:400;transform:scaleX(.91);transform-origin:right center;">2006</div>
<div class="t" style="left:377px;top:297.7px;line-height:19px;font-size:14px;color:#1a1a1a;font-weight:400;">fotbal</div>
<div class="t" style="left:629px;top:297.7px;line-height:19px;font-size:14px;color:#1a1a1a;font-weight:400;">M</div>
<div class="t" style="right:1208px;top:297.7px;line-height:19px;font-size:14px;color:#1a1a1a;font-weight:400;transform:scaleX(.91);transform-origin:right center;">1</div>
<div class="t" style="right:1160px;top:297.7px;line-height:19px;font-size:14px;color:#1a1a1a;font-weight:400;transform:scaleX(.91);transform-origin:right center;">0</div>
<div class="t" style="right:1095px;top:297.7px;line-height:19px;font-size:14px;color:#1a1a1a;font-weight:400;transform:scaleX(.91);transform-origin:right center;">0</div>
<div class="t" style="right:1025px;top:297.7px;line-height:19px;font-size:14px;color:#1a1a1a;font-weight:400;transform:scaleX(.91);transform-origin:right center;">1</div>
<div class="t" style="left:29px;top:317.7px;line-height:19px;font-size:14px;color:#1a1a1a;font-weight:400;">Bílek</div>
<div class="t" style="left:114px;top:317.7px;line-height:19px;font-size:14px;color:#1a1a1a;font-weight:400;">Tomáš</div>
<div class="t" style="right:1637px;top:317.7px;line-height:19px;font-size:14px;color:#1a1a1a;font-weight:400;transform:scaleX(.91);transform-origin:right center;">19.4.2013</div>
<div class="t" style="right:1549px;top:317.7px;line-height:19px;font-size:14px;color:#1a1a1a;font-weight:400;transform:scaleX(.91);transform-origin:right center;">2013</div>
<div class="t" style="left:377px;top:317.7px;line-height:19px;font-size:14px;color:#1a1a1a;font-weight:400;">fotbal</div>
<div class="t" style="left:629px;top:317.7px;line-height:19px;font-size:14px;color:#1a1a1a;font-weight:400;">M</div>
<div class="t" style="right:1208px;top:317.7px;line-height:19px;font-size:14px;color:#1a1a1a;font-weight:400;transform:scaleX(.91);transform-origin:right center;">2</div>
<div class="t" style="right:1160px;top:317.7px;line-height:19px;font-size:14px;color:#1a1a1a;font-weight:400;transform:scaleX(.91);transform-origin:right center;">0</div>
<div class="t" style="right:1095px;top:317.7px;line-height:19px;font-size:14px;color:#1a1a1a;font-weight:400;transform:scaleX(.91);transform-origin:right center;">0</div>
<div class="t" style="right:1025px;top:317.7px;line-height:19px;font-size:14px;color:#1a1a1a;font-weight:400;transform:scaleX(.91);transform-origin:right center;">1</div>
<div class="t" style="left:29px;top:337.7px;line-height:19px;font-size:14px;color:#1a1a1a;font-weight:400;">Blažek</div>
<div class="t" style="left:114px;top:337.7px;line-height:19px;font-size:14px;color:#1a1a1a;font-weight:400;">Karel</div>
<div class="t" style="right:1637px;top:337.7px;line-height:19px;font-size:14px;color:#1a1a1a;font-weight:400;transform:scaleX(.91);transform-origin:right center;">14.8.1971</div>
<div class="t" style="right:1549px;top:337.7px;line-height:19px;font-size:14px;color:#1a1a1a;font-weight:400;transform:scaleX(.91);transform-origin:right center;">1971</div>
<div class="t" style="left:377px;top:337.7px;line-height:19px;font-size:14px;color:#1a1a1a;font-weight:400;">fotbal</div>
<div class="t" style="left:629px;top:337.7px;line-height:19px;font-size:14px;color:#1a1a1a;font-weight:400;">M</div>
<div class="t" style="right:1208px;top:337.7px;line-height:19px;font-size:14px;color:#1a1a1a;font-weight:400;transform:scaleX(.91);transform-origin:right center;">3</div>
<div class="t" style="right:1160px;top:337.7px;line-height:19px;font-size:14px;color:#1a1a1a;font-weight:400;transform:scaleX(.91);transform-origin:right center;">0</div>
<div class="t" style="right:1095px;top:337.7px;line-height:19px;font-size:14px;color:#1a1a1a;font-weight:400;transform:scaleX(.91);transform-origin:right center;">0</div>
<div class="t" style="right:1025px;top:337.7px;line-height:19px;font-size:14px;color:#1a1a1a;font-weight:400;transform:scaleX(.91);transform-origin:right center;">1</div>
<div class="t" style="left:29px;top:357.7px;line-height:19px;font-size:14px;color:#1a1a1a;font-weight:400;">Bobek</div>
<div class="t" style="left:114px;top:357.7px;line-height:19px;font-size:14px;color:#1a1a1a;font-weight:400;">Ondřej</div>
<div class="t" style="right:1637px;top:357.7px;line-height:19px;font-size:14px;color:#1a1a1a;font-weight:400;transform:scaleX(.91);transform-origin:right center;">11.10.2001</div>
<div class="t" style="right:1549px;top:357.7px;line-height:19px;font-size:14px;color:#1a1a1a;font-weight:400;transform:scaleX(.91);transform-origin:right center;">2001</div>
<div class="t" style="left:377px;top:357.7px;line-height:19px;font-size:14px;color:#1a1a1a;font-weight:400;">fotbal</div>
<div class="t" style="left:629px;top:357.7px;line-height:19px;font-size:14px;color:#1a1a1a;font-weight:400;">M</div>
<div class="t" style="right:1208px;top:357.7px;line-height:19px;font-size:14px;color:#1a1a1a;font-weight:400;transform:scaleX(.91);transform-origin:right center;">1</div>
<div class="t" style="right:1160px;top:357.7px;line-height:19px;font-size:14px;color:#1a1a1a;font-weight:400;transform:scaleX(.91);transform-origin:right center;">0</div>
<div class="t" style="right:1095px;top:357.7px;line-height:19px;font-size:14px;color:#1a1a1a;font-weight:400;transform:scaleX(.91);transform-origin:right center;">0</div>
<div class="t" style="right:1025px;top:357.7px;line-height:19px;font-size:14px;color:#1a1a1a;font-weight:400;transform:scaleX(.91);transform-origin:right center;">1</div>
<div class="t" style="left:29px;top:377.7px;line-height:19px;font-size:14px;color:#1a1a1a;font-weight:400;">Bohatá</div>
<div class="t" style="left:114px;top:377.7px;line-height:19px;font-size:14px;color:#1a1a1a;font-weight:400;">Eva</div>
<div class="t" style="right:1637px;top:377.7px;line-height:19px;font-size:14px;color:#1a1a1a;font-weight:400;transform:scaleX(.91);transform-origin:right center;">14.4.2009</div>
<div class="t" style="right:1549px;top:377.7px;line-height:19px;font-size:14px;color:#1a1a1a;font-weight:400;transform:scaleX(.91);transform-origin:right center;">2009</div>
<div class="t" style="left:377px;top:377.7px;line-height:19px;font-size:14px;color:#1a1a1a;font-weight:400;">fotbal</div>
<div class="t" style="left:629px;top:377.7px;line-height:19px;font-size:14px;color:#1a1a1a;font-weight:400;">Z</div>
<div class="t" style="right:1208px;top:377.7px;line-height:19px;font-size:14px;color:#1a1a1a;font-weight:400;transform:scaleX(.91);transform-origin:right center;">1</div>
<div class="t" style="right:1160px;top:377.7px;line-height:19px;font-size:14px;color:#1a1a1a;font-weight:400;transform:scaleX(.91);transform-origin:right center;">0</div>
<div class="t" style="right:1095px;top:377.7px;line-height:19px;font-size:14px;color:#1a1a1a;font-weight:400;transform:scaleX(.91);transform-origin:right center;">0</div>
<div class="t" style="right:1025px;top:377.7px;line-height:19px;font-size:14px;color:#1a1a1a;font-weight:400;transform:scaleX(.91);transform-origin:right center;">1</div>
<div class="t" style="left:29px;top:397.7px;line-height:19px;font-size:14px;color:#1a1a1a;font-weight:400;">Bouček</div>
<div class="t" style="left:114px;top:397.7px;line-height:19px;font-size:14px;color:#1a1a1a;font-weight:400;">Josef</div>
<div class="t" style="right:1637px;top:397.7px;line-height:19px;font-size:14px;color:#1a1a1a;font-weight:400;transform:scaleX(.91);transform-origin:right center;">18.8.1971</div>
<div class="t" style="right:1549px;top:397.7px;line-height:19px;font-size:14px;color:#1a1a1a;font-weight:400;transform:scaleX(.91);transform-origin:right center;">1971</div>
<div class="t" style="left:377px;top:397.7px;line-height:19px;font-size:14px;color:#1a1a1a;font-weight:400;">fotbal</div>
<div class="t" style="left:629px;top:397.7px;line-height:19px;font-size:14px;color:#1a1a1a;font-weight:400;">M</div>
<div class="t" style="right:1208px;top:397.7px;line-height:19px;font-size:14px;color:#1a1a1a;font-weight:400;transform:scaleX(.91);transform-origin:right center;">3</div>
<div class="t" style="right:1160px;top:397.7px;line-height:19px;font-size:14px;color:#1a1a1a;font-weight:400;transform:scaleX(.91);transform-origin:right center;">0</div>
<div class="t" style="right:1095px;top:397.7px;line-height:19px;font-size:14px;color:#1a1a1a;font-weight:400;transform:scaleX(.91);transform-origin:right center;">1</div>
<div class="t" style="right:1025px;top:397.7px;line-height:19px;font-size:14px;color:#1a1a1a;font-weight:400;transform:scaleX(.91);transform-origin:right center;">1</div>
<div class="t" style="left:29px;top:417.7px;line-height:19px;font-size:14px;color:#1a1a1a;font-weight:400;">Boudová</div>
<div class="t" style="left:114px;top:417.7px;line-height:19px;font-size:14px;color:#1a1a1a;font-weight:400;">Jana</div>
<div class="t" style="right:1637px;top:417.7px;line-height:19px;font-size:14px;color:#1a1a1a;font-weight:400;transform:scaleX(.91);transform-origin:right center;">12.3.2005</div>
<div class="t" style="right:1549px;top:417.7px;line-height:19px;font-size:14px;color:#1a1a1a;font-weight:400;transform:scaleX(.91);transform-origin:right center;">2005</div>
<div class="t" style="left:377px;top:417.7px;line-height:19px;font-size:14px;color:#1a1a1a;font-weight:400;">fotbal</div>
<div class="t" style="left:629px;top:417.7px;line-height:19px;font-size:14px;color:#1a1a1a;font-weight:400;">Z</div>
<div class="t" style="right:1208px;top:417.7px;line-height:19px;font-size:14px;color:#1a1a1a;font-weight:400;transform:scaleX(.91);transform-origin:right center;">3</div>
<div class="t" style="right:1160px;top:417.7px;line-height:19px;font-size:14px;color:#1a1a1a;font-weight:400;transform:scaleX(.91);transform-origin:right center;">0</div>
<div class="t" style="right:1095px;top:417.7px;line-height:19px;font-size:14px;color:#1a1a1a;font-weight:400;transform:scaleX(.91);transform-origin:right center;">0</div>
<div class="t" style="right:1025px;top:417.7px;line-height:19px;font-size:14px;color:#1a1a1a;font-weight:400;transform:scaleX(.91);transform-origin:right center;">1</div>
<div class="t" style="left:29px;top:437.7px;line-height:19px;font-size:14px;color:#1a1a1a;font-weight:400;">Brabec</div>
<div class="t" style="left:114px;top:437.7px;line-height:19px;font-size:14px;color:#1a1a1a;font-weight:400;">Pavel</div>
<div class="t" style="right:1637px;top:437.7px;line-height:19px;font-size:14px;color:#1a1a1a;font-weight:400;transform:scaleX(.91);transform-origin:right center;">10.1.1990</div>
<div class="t" style="right:1549px;top:437.7px;line-height:19px;font-size:14px;color:#1a1a1a;font-weight:400;transform:scaleX(.91);transform-origin:right center;">1990</div>
<div class="t" style="left:377px;top:437.7px;line-height:19px;font-size:14px;color:#1a1a1a;font-weight:400;">fotbal</div>
<div class="t" style="left:629px;top:437.7px;line-height:19px;font-size:14px;color:#1a1a1a;font-weight:400;">M</div>
<div class="t" style="right:1208px;top:437.7px;line-height:19px;font-size:14px;color:#1a1a1a;font-weight:400;transform:scaleX(.91);transform-origin:right center;">1</div>
<div class="t" style="right:1160px;top:437.7px;line-height:19px;font-size:14px;color:#1a1a1a;font-weight:400;transform:scaleX(.91);transform-origin:right center;">0</div>
<div class="t" style="right:1095px;top:437.7px;line-height:19px;font-size:14px;color:#1a1a1a;font-weight:400;transform:scaleX(.91);transform-origin:right center;">0</div>
<div class="t" style="right:1025px;top:437.7px;line-height:19px;font-size:14px;color:#1a1a1a;font-weight:400;transform:scaleX(.91);transform-origin:right center;">1</div>
<div class="t" style="left:29px;top:457.7px;line-height:19px;font-size:14px;color:#1a1a1a;font-weight:400;">Brada</div>
<div class="t" style="left:114px;top:457.7px;line-height:19px;font-size:14px;color:#1a1a1a;font-weight:400;">Jiří</div>
<div class="t" style="right:1637px;top:457.7px;line-height:19px;font-size:14px;color:#1a1a1a;font-weight:400;transform:scaleX(.91);transform-origin:right center;">12.5.1985</div>
<div class="t" style="right:1549px;top:457.7px;line-height:19px;font-size:14px;color:#1a1a1a;font-weight:400;transform:scaleX(.91);transform-origin:right center;">1985</div>
<div class="t" style="left:377px;top:457.7px;line-height:19px;font-size:14px;color:#1a1a1a;font-weight:400;">fotbal</div>
<div class="t" style="left:629px;top:457.7px;line-height:19px;font-size:14px;color:#1a1a1a;font-weight:400;">M</div>
<div class="t" style="right:1208px;top:457.7px;line-height:19px;font-size:14px;color:#1a1a1a;font-weight:400;transform:scaleX(.91);transform-origin:right center;">1</div>
<div class="t" style="right:1160px;top:457.7px;line-height:19px;font-size:14px;color:#1a1a1a;font-weight:400;transform:scaleX(.91);transform-origin:right center;">0</div>
<div class="t" style="right:1095px;top:457.7px;line-height:19px;font-size:14px;color:#1a1a1a;font-weight:400;transform:scaleX(.91);transform-origin:right center;">0</div>
<div class="t" style="right:1025px;top:457.7px;line-height:19px;font-size:14px;color:#1a1a1a;font-weight:400;transform:scaleX(.91);transform-origin:right center;">1</div>
<div class="t" style="left:29px;top:477.7px;line-height:19px;font-size:14px;color:#1a1a1a;font-weight:400;">Brabec</div>
<div class="t" style="left:114px;top:477.7px;line-height:19px;font-size:14px;color:#1a1a1a;font-weight:400;">Adam</div>
<div class="t" style="right:1637px;top:477.7px;line-height:19px;font-size:14px;color:#1a1a1a;font-weight:400;transform:scaleX(.91);transform-origin:right center;">23.7.2013</div>
<div class="t" style="right:1549px;top:477.7px;line-height:19px;font-size:14px;color:#1a1a1a;font-weight:400;transform:scaleX(.91);transform-origin:right center;">2013</div>
<div class="t" style="left:377px;top:477.7px;line-height:19px;font-size:14px;color:#1a1a1a;font-weight:400;">fotbal</div>
<div class="t" style="left:629px;top:477.7px;line-height:19px;font-size:14px;color:#1a1a1a;font-weight:400;">M</div>
<div class="t" style="right:1208px;top:477.7px;line-height:19px;font-size:14px;color:#1a1a1a;font-weight:400;transform:scaleX(.91);transform-origin:right center;">2</div>
<div class="t" style="right:1160px;top:477.7px;line-height:19px;font-size:14px;color:#1a1a1a;font-weight:400;transform:scaleX(.91);transform-origin:right center;">0</div>
<div class="t" style="right:1095px;top:477.7px;line-height:19px;font-size:14px;color:#1a1a1a;font-weight:400;transform:scaleX(.91);transform-origin:right center;">0</div>
<div class="t" style="right:1025px;top:477.7px;line-height:19px;font-size:14px;color:#1a1a1a;font-weight:400;transform:scaleX(.91);transform-origin:right center;">1</div>
<div class="t" style="left:29px;top:497.7px;line-height:19px;font-size:14px;color:#1a1a1a;font-weight:400;">Brabcak</div>
<div class="t" style="left:114px;top:497.7px;line-height:19px;font-size:14px;color:#1a1a1a;font-weight:400;">Jakub</div>
<div class="t" style="right:1637px;top:497.7px;line-height:19px;font-size:14px;color:#1a1a1a;font-weight:400;transform:scaleX(.91);transform-origin:right center;">15.4.2008</div>
<div class="t" style="right:1549px;top:497.7px;line-height:19px;font-size:14px;color:#1a1a1a;font-weight:400;transform:scaleX(.91);transform-origin:right center;">2008</div>
<div class="t" style="left:377px;top:497.7px;line-height:19px;font-size:14px;color:#1a1a1a;font-weight:400;">fotbal</div>
<div class="t" style="left:629px;top:497.7px;line-height:19px;font-size:14px;color:#1a1a1a;font-weight:400;">M</div>
<div class="t" style="right:1208px;top:497.7px;line-height:19px;font-size:14px;color:#1a1a1a;font-weight:400;transform:scaleX(.91);transform-origin:right center;">1</div>
<div class="t" style="right:1160px;top:497.7px;line-height:19px;font-size:14px;color:#1a1a1a;font-weight:400;transform:scaleX(.91);transform-origin:right center;">0</div>
<div class="t" style="right:1095px;top:497.7px;line-height:19px;font-size:14px;color:#1a1a1a;font-weight:400;transform:scaleX(.91);transform-origin:right center;">0</div>
<div class="t" style="right:1025px;top:497.7px;line-height:19px;font-size:14px;color:#1a1a1a;font-weight:400;transform:scaleX(.91);transform-origin:right center;">1</div>
<div class="t" style="left:1004px;top:237.5px;line-height:18px;font-size:13px;color:#fff;font-weight:700;">Členské ID</div>
<div class="t" style="left:1080px;top:237.5px;line-height:18px;font-size:13px;color:#fff;font-weight:700;">Příjmení</div>
<div class="t" style="left:1156px;top:237.5px;line-height:18px;font-size:13px;color:#fff;font-weight:700;">Jméno</div>
<div class="t" style="left:1209px;top:237.5px;line-height:18px;font-size:13px;color:#fff;font-weight:700;">Rok narození</div>
<div class="t" style="left:1297px;top:237.5px;line-height:18px;font-size:13px;color:#fff;font-weight:700;">Číslo klubu</div>
<div class="t" style="left:1375px;top:237.5px;line-height:18px;font-size:13px;color:#fff;font-weight:700;">Název klubu</div>
<div class="t" style="left:1004px;top:257.7px;line-height:19px;font-size:14px;color:#1a1a1a;font-weight:400;transform:scaleX(.91);transform-origin:left center;">13040113</div>
<div class="t" style="left:1080px;top:257.7px;line-height:19px;font-size:14px;color:#1a1a1a;font-weight:400;">Balažovič</div>
<div class="t" style="left:1156px;top:257.7px;line-height:19px;font-size:14px;color:#1a1a1a;font-weight:400;">Erik</div>
<div class="t" style="right:629px;top:257.7px;line-height:19px;font-size:14px;color:#1a1a1a;font-weight:400;transform:scaleX(.91);transform-origin:right center;">2013</div>
<div class="t" style="left:1297px;top:257.7px;line-height:19px;font-size:14px;color:#1a1a1a;font-weight:400;transform:scaleX(.91);transform-origin:left center;">8050211</div>
<div class="t" style="left:1375px;top:257.7px;line-height:19px;font-size:14px;color:#1a1a1a;font-weight:400;transform:scaleX(.965);transform-origin:left center;">Tělovýchovná jednota Vřesina</div>
<div class="t" style="left:1004px;top:277.7px;line-height:19px;font-size:14px;color:#1a1a1a;font-weight:400;transform:scaleX(.91);transform-origin:left center;">88030595</div>
<div class="t" style="left:1080px;top:277.7px;line-height:19px;font-size:14px;color:#1a1a1a;font-weight:400;">Boháč</div>
<div class="t" style="left:1156px;top:277.7px;line-height:19px;font-size:14px;color:#1a1a1a;font-weight:400;">Martin</div>
<div class="t" style="right:629px;top:277.7px;line-height:19px;font-size:14px;color:#1a1a1a;font-weight:400;transform:scaleX(.91);transform-origin:right center;">1988</div>
<div class="t" style="left:1297px;top:277.7px;line-height:19px;font-size:14px;color:#1a1a1a;font-weight:400;transform:scaleX(.91);transform-origin:left center;">8050211</div>
<div class="t" style="left:1375px;top:277.7px;line-height:19px;font-size:14px;color:#1a1a1a;font-weight:400;transform:scaleX(.965);transform-origin:left center;">Tělovýchovná jednota Vřesina</div>
<div class="t" style="left:1004px;top:297.7px;line-height:19px;font-size:14px;color:#1a1a1a;font-weight:400;transform:scaleX(.91);transform-origin:left center;">93090079</div>
<div class="t" style="left:1080px;top:297.7px;line-height:19px;font-size:14px;color:#1a1a1a;font-weight:400;">Bukovec</div>
<div class="t" style="left:1156px;top:297.7px;line-height:19px;font-size:14px;color:#1a1a1a;font-weight:400;">Jan</div>
<div class="t" style="right:629px;top:297.7px;line-height:19px;font-size:14px;color:#1a1a1a;font-weight:400;transform:scaleX(.91);transform-origin:right center;">1993</div>
<div class="t" style="left:1297px;top:297.7px;line-height:19px;font-size:14px;color:#1a1a1a;font-weight:400;transform:scaleX(.91);transform-origin:left center;">8050211</div>
<div class="t" style="left:1375px;top:297.7px;line-height:19px;font-size:14px;color:#1a1a1a;font-weight:400;transform:scaleX(.965);transform-origin:left center;">Tělovýchovná jednota Vřesina</div>
<div class="t" style="left:1004px;top:317.7px;line-height:19px;font-size:14px;color:#1a1a1a;font-weight:400;transform:scaleX(.91);transform-origin:left center;">86012282</div>
<div class="t" style="left:1080px;top:317.7px;line-height:19px;font-size:14px;color:#1a1a1a;font-weight:400;">Dostál</div>
<div class="t" style="left:1156px;top:317.7px;line-height:19px;font-size:14px;color:#1a1a1a;font-weight:400;">Oldřich</div>
<div class="t" style="right:629px;top:317.7px;line-height:19px;font-size:14px;color:#1a1a1a;font-weight:400;transform:scaleX(.91);transform-origin:right center;">1986</div>
<div class="t" style="left:1297px;top:317.7px;line-height:19px;font-size:14px;color:#1a1a1a;font-weight:400;transform:scaleX(.91);transform-origin:left center;">8050211</div>
<div class="t" style="left:1375px;top:317.7px;line-height:19px;font-size:14px;color:#1a1a1a;font-weight:400;transform:scaleX(.965);transform-origin:left center;">Tělovýchovná jednota Vřesina</div>
<div class="t" style="left:1004px;top:337.7px;line-height:19px;font-size:14px;color:#1a1a1a;font-weight:400;transform:scaleX(.91);transform-origin:left center;">86010722</div>
<div class="t" style="left:1080px;top:337.7px;line-height:19px;font-size:14px;color:#1a1a1a;font-weight:400;">Gruň</div>
<div class="t" style="left:1156px;top:337.7px;line-height:19px;font-size:14px;color:#1a1a1a;font-weight:400;">Filip</div>
<div class="t" style="right:629px;top:337.7px;line-height:19px;font-size:14px;color:#1a1a1a;font-weight:400;transform:scaleX(.91);transform-origin:right center;">1986</div>
<div class="t" style="left:1297px;top:337.7px;line-height:19px;font-size:14px;color:#1a1a1a;font-weight:400;transform:scaleX(.91);transform-origin:left center;">8050211</div>
<div class="t" style="left:1375px;top:337.7px;line-height:19px;font-size:14px;color:#1a1a1a;font-weight:400;transform:scaleX(.965);transform-origin:left center;">Tělovýchovná jednota Vřesina</div>
<div class="t" style="left:1004px;top:357.7px;line-height:19px;font-size:14px;color:#1a1a1a;font-weight:400;transform:scaleX(.91);transform-origin:left center;">98080497</div>
<div class="t" style="left:1080px;top:357.7px;line-height:19px;font-size:14px;color:#1a1a1a;font-weight:400;">Guřan</div>
<div class="t" style="left:1156px;top:357.7px;line-height:19px;font-size:14px;color:#1a1a1a;font-weight:400;">Matěj</div>
<div class="t" style="right:629px;top:357.7px;line-height:19px;font-size:14px;color:#1a1a1a;font-weight:400;transform:scaleX(.91);transform-origin:right center;">1998</div>
<div class="t" style="left:1297px;top:357.7px;line-height:19px;font-size:14px;color:#1a1a1a;font-weight:400;transform:scaleX(.91);transform-origin:left center;">8050211</div>
<div class="t" style="left:1375px;top:357.7px;line-height:19px;font-size:14px;color:#1a1a1a;font-weight:400;transform:scaleX(.965);transform-origin:left center;">Tělovýchovná jednota Vřesina</div>
<div class="t" style="left:1004px;top:377.7px;line-height:19px;font-size:14px;color:#1a1a1a;font-weight:400;"></div>
<div class="t" style="left:1080px;top:377.7px;line-height:19px;font-size:14px;color:#1a1a1a;font-weight:400;">Hlaváč</div>
<div class="t" style="left:1156px;top:377.7px;line-height:19px;font-size:14px;color:#1a1a1a;font-weight:400;">Daniel</div>
<div class="t" style="right:629px;top:377.7px;line-height:19px;font-size:14px;color:#1a1a1a;font-weight:400;transform:scaleX(.91);transform-origin:right center;">2002</div>
<div class="t" style="left:1297px;top:377.7px;line-height:19px;font-size:14px;color:#1a1a1a;font-weight:400;transform:scaleX(.91);transform-origin:left center;">8050211</div>
<div class="t" style="left:1375px;top:377.7px;line-height:19px;font-size:14px;color:#1a1a1a;font-weight:400;transform:scaleX(.965);transform-origin:left center;">Tělovýchovná jednota Vřesina</div>
<div class="t" style="left:1004px;top:397.7px;line-height:19px;font-size:14px;color:#1a1a1a;font-weight:400;transform:scaleX(.91);transform-origin:left center;">82041267</div>
<div class="t" style="left:1080px;top:397.7px;line-height:19px;font-size:14px;color:#1a1a1a;font-weight:400;">Hofrichter</div>
<div class="t" style="left:1156px;top:397.7px;line-height:19px;font-size:14px;color:#1a1a1a;font-weight:400;">Kamil</div>
<div class="t" style="right:629px;top:397.7px;line-height:19px;font-size:14px;color:#1a1a1a;font-weight:400;transform:scaleX(.91);transform-origin:right center;">1982</div>
<div class="t" style="left:1297px;top:397.7px;line-height:19px;font-size:14px;color:#1a1a1a;font-weight:400;transform:scaleX(.91);transform-origin:left center;">8050211</div>
<div class="t" style="left:1375px;top:397.7px;line-height:19px;font-size:14px;color:#1a1a1a;font-weight:400;transform:scaleX(.965);transform-origin:left center;">Tělovýchovná jednota Vřesina</div>
<div class="t" style="left:1004px;top:417.7px;line-height:19px;font-size:14px;color:#1a1a1a;font-weight:400;transform:scaleX(.91);transform-origin:left center;">11051462</div>
<div class="t" style="left:1080px;top:417.7px;line-height:19px;font-size:14px;color:#1a1a1a;font-weight:400;">Hudeček</div>
<div class="t" style="left:1156px;top:417.7px;line-height:19px;font-size:14px;color:#1a1a1a;font-weight:400;">Šimon</div>
<div class="t" style="right:629px;top:417.7px;line-height:19px;font-size:14px;color:#1a1a1a;font-weight:400;transform:scaleX(.91);transform-origin:right center;">2011</div>
<div class="t" style="left:1297px;top:417.7px;line-height:19px;font-size:14px;color:#1a1a1a;font-weight:400;transform:scaleX(.91);transform-origin:left center;">8050211</div>
<div class="t" style="left:1375px;top:417.7px;line-height:19px;font-size:14px;color:#1a1a1a;font-weight:400;transform:scaleX(.965);transform-origin:left center;">Tělovýchovná jednota Vřesina</div>
<div class="t" style="left:1004px;top:437.7px;line-height:19px;font-size:14px;color:#1a1a1a;font-weight:400;transform:scaleX(.91);transform-origin:left center;">84120945</div>
<div class="t" style="left:1080px;top:437.7px;line-height:19px;font-size:14px;color:#1a1a1a;font-weight:400;">Kaštovský</div>
<div class="t" style="left:1156px;top:437.7px;line-height:19px;font-size:14px;color:#1a1a1a;font-weight:400;">Jan</div>
<div class="t" style="right:629px;top:437.7px;line-height:19px;font-size:14px;color:#1a1a1a;font-weight:400;transform:scaleX(.91);transform-origin:right center;">1984</div>
<div class="t" style="left:1297px;top:437.7px;line-height:19px;font-size:14px;color:#1a1a1a;font-weight:400;transform:scaleX(.91);transform-origin:left center;">8050211</div>
<div class="t" style="left:1375px;top:437.7px;line-height:19px;font-size:14px;color:#1a1a1a;font-weight:400;transform:scaleX(.965);transform-origin:left center;">Tělovýchovná jednota Vřesina</div>
<div class="t" style="left:1004px;top:457.7px;line-height:19px;font-size:14px;color:#1a1a1a;font-weight:400;transform:scaleX(.91);transform-origin:left center;">79030873</div>
<div class="t" style="left:1080px;top:457.7px;line-height:19px;font-size:14px;color:#1a1a1a;font-weight:400;">Kocur</div>
<div class="t" style="left:1156px;top:457.7px;line-height:19px;font-size:14px;color:#1a1a1a;font-weight:400;">Roman</div>
<div class="t" style="right:629px;top:457.7px;line-height:19px;font-size:14px;color:#1a1a1a;font-weight:400;transform:scaleX(.91);transform-origin:right center;">1979</div>
<div class="t" style="left:1297px;top:457.7px;line-height:19px;font-size:14px;color:#1a1a1a;font-weight:400;transform:scaleX(.91);transform-origin:left center;">8050211</div>
<div class="t" style="left:1375px;top:457.7px;line-height:19px;font-size:14px;color:#1a1a1a;font-weight:400;transform:scaleX(.965);transform-origin:left center;">Tělovýchovná jednota Vřesina</div>
<div class="t" style="left:1004px;top:477.7px;line-height:19px;font-size:14px;color:#1a1a1a;font-weight:400;transform:scaleX(.91);transform-origin:left center;">86042315</div>
<div class="t" style="left:1080px;top:477.7px;line-height:19px;font-size:14px;color:#1a1a1a;font-weight:400;">Kučera</div>
<div class="t" style="left:1156px;top:477.7px;line-height:19px;font-size:14px;color:#1a1a1a;font-weight:400;">Jan</div>
<div class="t" style="right:629px;top:477.7px;line-height:19px;font-size:14px;color:#1a1a1a;font-weight:400;transform:scaleX(.91);transform-origin:right center;">1986</div>
<div class="t" style="left:1297px;top:477.7px;line-height:19px;font-size:14px;color:#1a1a1a;font-weight:400;transform:scaleX(.91);transform-origin:left center;">8050211</div>
<div class="t" style="left:1375px;top:477.7px;line-height:19px;font-size:14px;color:#1a1a1a;font-weight:400;transform:scaleX(.965);transform-origin:left center;">Tělovýchovná jednota Vřesina</div>
<div class="t" style="left:1004px;top:497.7px;line-height:19px;font-size:14px;color:#1a1a1a;font-weight:400;transform:scaleX(.91);transform-origin:left center;">08101753</div>
<div class="t" style="left:1080px;top:497.7px;line-height:19px;font-size:14px;color:#1a1a1a;font-weight:400;">Kunková</div>
<div class="t" style="left:1156px;top:497.7px;line-height:19px;font-size:14px;color:#1a1a1a;font-weight:400;">Tereza</div>
<div class="t" style="right:629px;top:497.7px;line-height:19px;font-size:14px;color:#1a1a1a;font-weight:400;transform:scaleX(.91);transform-origin:right center;">2008</div>
<div class="t" style="left:1297px;top:497.7px;line-height:19px;font-size:14px;color:#1a1a1a;font-weight:400;transform:scaleX(.91);transform-origin:left center;">8050211</div>
<div class="t" style="left:1375px;top:497.7px;line-height:19px;font-size:14px;color:#1a1a1a;font-weight:400;transform:scaleX(.965);transform-origin:left center;">Tělovýchovná jednota Vřesina</div>
<div style="left:827px;top:255px;width:72px;height:23px;border:2px solid #107c41;box-sizing:border-box"></div>
<div style="left:895px;top:274px;width:5px;height:5px;background:#107c41;outline:1px solid #fff"></div>
<div style="left:1548px;top:165px;width:372px;height:342px;background:#f0f0f0"></div>
<div style="left:1551px;top:172px;width:18px;height:335px;background:#f7f7f7;border-radius:9px 9px 0 0"></div>
<div style="left:1555px;top:189px;width:9px;height:207px;background:#6e6e6e;border-radius:5px"></div>
<div style="left:1570px;top:173px;width:1px;height:334px;background:#dedede"></div>
<div class="t" style="left:1584px;top:183.5px;line-height:29px;font-size:21px;color:#3c3c3c;font-weight:400;">Dotazy a pripojenia</div>
<div style="left:1584px;top:219px;width:322px;height:288px;background:#fff"></div>
<div class="t" style="left:1584px;top:225.0px;line-height:16px;font-size:12px;color:#262626;font-weight:700;">Dotazy</div>
<div style="left:1584px;top:244px;width:38px;height:3px;background:#107c41"></div>
<div style="left:1630px;top:223px;width:1px;height:18px;background:#c8c8c8"></div>
<div class="t" style="left:1640px;top:225.0px;line-height:16px;font-size:12px;color:#262626;font-weight:400;">Pripojenia</div>
<div class="t" style="left:1584px;top:255.5px;line-height:15px;font-size:11px;color:#262626;font-weight:400;">Dotazy: 6</div>
<div style="left:1584px;top:272px;width:322px;height:1px;background:#8a8a8a"></div>
<div style="left:1584px;top:281px;width:322px;height:50px;background:#9fd5b7"></div>
<div class="t" style="left:1608px;top:285.5px;line-height:19px;font-size:14px;color:#4a4a4a;font-weight:400;">ClenoveVKlubu</div>
<div class="t" style="left:1608px;top:308.0px;line-height:18px;font-size:13px;color:#262626;font-weight:400;">Načítané riadky: 170.</div>
<div class="t" style="left:1608px;top:335.5px;line-height:19px;font-size:14px;color:#4a4a4a;font-weight:400;">SeznamClenu</div>
<div class="t" style="left:1608px;top:358.0px;line-height:18px;font-size:13px;color:#262626;font-weight:400;">Načítané riadky: 28.</div>
<div class="t" style="left:1608px;top:385.5px;line-height:19px;font-size:14px;color:#4a4a4a;font-weight:400;">tblClenoveVKlubu</div>
<div class="t" style="left:1608px;top:408.0px;line-height:18px;font-size:13px;color:#262626;font-weight:400;">Iba pripojenie.</div>
<div class="t" style="left:1608px;top:435.5px;line-height:19px;font-size:14px;color:#4a4a4a;font-weight:400;">tblSeznamClenu</div>
<div class="t" style="left:1608px;top:458.0px;line-height:18px;font-size:13px;color:#262626;font-weight:400;">Iba pripojenie.</div>
<div class="t" style="left:1608px;top:485.5px;line-height:19px;font-size:14px;color:#4a4a4a;font-weight:400;">fncParam</div>
<svg style="position:absolute;left:0;top:0" width="1920" height="507" viewBox="0 0 1920 507" fill="none"><rect x="1589" y="288" width="13" height="12" fill="#5a5a5a"/><rect x="1589" y="288" width="13" height="2.6" fill="#4a7cc4"/><rect x="1590.2" y="291.4" width="2.9" height="2" fill="#fff"/><rect x="1594.1" y="291.4" width="2.9" height="2" fill="#fff"/><rect x="1598.0" y="291.4" width="2.9" height="2" fill="#fff"/><rect x="1590.2" y="294.3" width="2.9" height="2" fill="#fff"/><rect x="1594.1" y="294.3" width="2.9" height="2" fill="#fff"/><rect x="1598.0" y="294.3" width="2.9" height="2" fill="#fff"/><rect x="1590.2" y="297.2" width="2.9" height="2" fill="#fff"/><rect x="1594.1" y="297.2" width="2.9" height="2" fill="#fff"/><rect x="1598.0" y="297.2" width="2.9" height="2" fill="#fff"/><rect x="1589" y="338" width="13" height="12" fill="#5a5a5a"/><rect x="1589" y="338" width="13" height="2.6" fill="#4a7cc4"/><rect x="1590.2" y="341.4" width="2.9" height="2" fill="#fff"/><rect x="1594.1" y="341.4" width="2.9" height="2" fill="#fff"/><rect x="1598.0" y="341.4" width="2.9" height="2" fill="#fff"/><rect x="1590.2" y="344.3" width="2.9" height="2" fill="#fff"/><rect x="1594.1" y="344.3" width="2.9" height="2" fill="#fff"/><rect x="1598.0" y="344.3" width="2.9" height="2" fill="#fff"/><rect x="1590.2" y="347.2" width="2.9" height="2" fill="#fff"/><rect x="1594.1" y="347.2" width="2.9" height="2" fill="#fff"/><rect x="1598.0" y="347.2" width="2.9" height="2" fill="#fff"/><rect x="1589" y="388" width="13" height="12" fill="#5a5a5a"/><rect x="1589" y="388" width="13" height="2.6" fill="#4a7cc4"/><rect x="1590.2" y="391.4" width="2.9" height="2" fill="#fff"/><rect x="1594.1" y="391.4" width="2.9" height="2" fill="#fff"/><rect x="1598.0" y="391.4" width="2.9" height="2" fill="#fff"/><rect x="1590.2" y="394.3" width="2.9" height="2" fill="#fff"/><rect x="1594.1" y="394.3" width="2.9" height="2" fill="#fff"/><rect x="1598.0" y="394.3" width="2.9" height="2" fill="#fff"/><rect x="1590.2" y="397.2" width="2.9" height="2" fill="#fff"/><rect x="1594.1" y="397.2" width="2.9" height="2" fill="#fff"/><rect x="1598.0" y="397.2" width="2.9" height="2" fill="#fff"/><rect x="1589" y="438" width="13" height="12" fill="#5a5a5a"/><rect x="1589" y="438" width="13" height="2.6" fill="#4a7cc4"/><rect x="1590.2" y="441.4" width="2.9" height="2" fill="#fff"/><rect x="1594.1" y="441.4" width="2.9" height="2" fill="#fff"/><rect x="1598.0" y="441.4" width="2.9" height="2" fill="#fff"/><rect x="1590.2" y="444.3" width="2.9" height="2" fill="#fff"/><rect x="1594.1" y="444.3" width="2.9" height="2" fill="#fff"/><rect x="1598.0" y="444.3" width="2.9" height="2" fill="#fff"/><rect x="1590.2" y="447.2" width="2.9" height="2" fill="#fff"/><rect x="1594.1" y="447.2" width="2.9" height="2" fill="#fff"/><rect x="1598.0" y="447.2" width="2.9" height="2" fill="#fff"/><text x="1590.5" y="500" font-family="Liberation Serif" font-style="italic" font-size="16" fill="#444">fx</text><path d="M1890.5 288.5H1897.5L1901.5 292.5V302.5H1890.5Z" fill="#fff" stroke="#555" stroke-width="1" stroke-linejoin="miter"/><path d="M1897.5 288.5V292.5H1901.5" stroke="#555" stroke-width="1"/><circle cx="1900.5" cy="300" r="3.5" fill="#9fd5b7"/><path d="M1897.5 299.5A3 3 0 0 1 1903 298.5M1903.5 301A3 3 0 0 1 1898 302" stroke="#2e9e48" fill="none"/><path d="M1848.5 191.5L1855 198.5L1861.5 191.5" stroke="#444" stroke-width="1.2" fill="none"/><path d="M1890.5 189.5L1901.5 200.5M1901.5 189.5L1890.5 200.5" stroke="#444" stroke-width="1.2"/><path d="M1896.5 147.5L1902 153.5L1907.5 147.5" stroke="#333333" stroke-width="1.3" fill="none"/><path d="M1555 183.5H1564L1559.5 177.5Z" fill="#6e6e6e"/></svg>
<div style="left:20px;top:104px;width:215px;height:391px;background:#fff;border:1px solid #707070;box-sizing:border-box;box-shadow:2px 2px 4px rgba(0,0,0,.15)"></div>
<div class="t" style="left:71px;top:122.0px;line-height:16px;font-size:12px;color:#1a1a1a;font-weight:700;">Zo <u>s</u>úboru</div>
<div class="t" style="left:71px;top:164.0px;line-height:16px;font-size:12px;color:#1a1a1a;font-weight:700;">Z <u>d</u>atabázy</div>
<div class="t" style="left:71px;top:206.0px;line-height:16px;font-size:12px;color:#1a1a1a;font-weight:700;">Zo služby <u>A</u>zure</div>
<div class="t" style="left:71px;top:248.0px;line-height:16px;font-size:12px;color:#1a1a1a;font-weight:700;">Z Po<u>w</u>er Platform</div>
<div class="t" style="left:71px;top:290.0px;line-height:16px;font-size:12px;color:#1a1a1a;font-weight:700;">Z online <u>s</u>lužieb</div>
<div class="t" style="left:71px;top:332.0px;line-height:16px;font-size:12px;color:#1a1a1a;font-weight:700;">Z iných zdr<u>o</u>jov</div>
<div class="t" style="left:71px;top:376.0px;line-height:16px;font-size:12px;color:#1a1a1a;font-weight:700;"><u>K</u>ombinovať dotazy</div>
<div style="left:66px;top:359px;width:166px;height:1px;background:#d6d6d6"></div>
<div style="left:22px;top:403px;width:210px;height:1px;background:#dcdcdc"></div>
<div style="left:54px;top:436px;width:178px;height:1px;background:#d6d6d6"></div>
<div style="left:22px;top:405px;width:210px;height:29px;background:#f0f0f0"></div>
<div class="t" style="left:59px;top:412.0px;line-height:16px;font-size:12px;color:#1a1a1a;font-weight:400;"><u>S</u>pustiť editor Power Query...</div>
<div class="t" style="left:59px;top:443.0px;line-height:16px;font-size:12px;color:#1a1a1a;font-weight:400;"><u>N</u>astavenie zdroja údajov...</div>
<div class="t" style="left:59px;top:471.0px;line-height:16px;font-size:12px;color:#1a1a1a;font-weight:400;"><u>M</u>ožnosti dotazu</div>
<svg style="position:absolute;left:0;top:0" width="1920" height="507" viewBox="0 0 1920 507" fill="none"><path d="M39.5 113.5H51.5L59.5 121.5V140.5H39.5Z" fill="#f7f7f7" stroke="#333333" stroke-width="1" stroke-linejoin="miter"/><path d="M51.5 113.5V121.5H59.5" stroke="#333333" stroke-width="1"/><path d="M39.5 155.5H51.5L59.5 163.5V182.5H39.5Z" fill="#f7f7f7" stroke="#333333" stroke-width="1" stroke-linejoin="miter"/><path d="M51.5 155.5V163.5H59.5" stroke="#333333" stroke-width="1"/><rect x="52" y="166" width="15" height="20" fill="#fff"/><path d="M53.5 170.1V181.4A6.0 2.6 0 0 0 65.5 181.4V170.1" fill="#f7f7f7" stroke="#d9771e" stroke-width="1.1"/><ellipse cx="59.5" cy="170.1" rx="6.0" ry="2.6" fill="#f7f7f7" stroke="#d9771e" stroke-width="1.1"/><path d="M49.5 199.2H55.5L62.8 222.3H52.8Z" fill="#f7f7f7" stroke="#1e88d8" stroke-width="1.6" stroke-linejoin="round"/><path d="M44 216L48.5 215.5L52.8 222.3" fill="#f7f7f7" stroke="#1e88d8" stroke-width="1.6" stroke-linejoin="round"/><path d="M45 198.5H50.5L48 213.5L43.5 216.2L48.3 220.3L46.5 223H36.8Z" fill="#1e88d8" stroke="#1e88d8" stroke-width=".8" stroke-linejoin="round"/><path d="M46 239.3H59.8Q64 239.3 63.6 243.6Q63.3 245.4 62 246H43.2L44.6 240.5Q45 239.3 46 239.3Z" fill="#363636"/><path d="M42.6 248.6H61.8L57.3 254.2Q56.6 255.3 55.2 255.3H37.5L40.8 249.6Q41.3 248.6 42.6 248.6Z" stroke="#363636" stroke-width="1.5" stroke-linejoin="round" fill="none"/><path d="M63.3 244.8L61.8 248.6M37.5 255.3Q36.3 256.5 37 258L40.6 265.4Q41.6 267 42.6 265.4L47.3 255.6" stroke="#363636" stroke-width="1.5" stroke-linejoin="round" stroke-linecap="round" fill="none"/><path d="M39.5 281.5H51.5L59.5 289.5V308.5H39.5Z" fill="#f7f7f7" stroke="#333333" stroke-width="1" stroke-linejoin="miter"/><path d="M51.5 281.5V289.5H59.5" stroke="#333333" stroke-width="1"/><path d="M46 311H66V298H46Z" fill="#fff"/><path d="M50 309.5H63A3 3 0 0 0 62.5 303.5A5 5 0 0 0 53 302.5A3.5 3.5 0 0 0 50 309.5Z" fill="#fff" stroke="#1e88d8" stroke-width="1.2"/><path d="M39.5 323.5H51.5L59.5 331.5V350.5H39.5Z" fill="#f7f7f7" stroke="#333333" stroke-width="1" stroke-linejoin="miter"/><path d="M51.5 323.5V331.5H59.5" stroke="#333333" stroke-width="1"/><rect x="50" y="336" width="17" height="16" fill="#fff"/><circle cx="54.5" cy="339.5" r="2" fill="#fff" stroke="#1e88d8" stroke-width="1.1"/><circle cx="54.5" cy="348" r="2.8" fill="#fff" stroke="#1e88d8" stroke-width="1.1"/><circle cx="63.5" cy="348" r="2" fill="#fff" stroke="#1e88d8" stroke-width="1.1"/><path d="M54.5 341.5V345.2M57.3 348H61.5" stroke="#1e88d8" stroke-width="1.1"/><rect x="36.5" y="368.5" width="18" height="17" fill="#fafafa" stroke="#444"/><rect x="36.5" y="368.5" width="18" height="2.5" fill="#777"/><path d="M36.5 375.5H54.5M36.5 380.5H54.5M42.5 371.0V385.5M48.5 371.0V385.5" stroke="#555" stroke-width=".9"/><rect x="45" y="377" width="20" height="20" fill="#fff"/><rect x="45.5" y="377.5" width="18" height="18" fill="#fafafa" stroke="#444"/><rect x="45.5" y="377.5" width="18" height="2.5" fill="#777"/><path d="M45.5 384.5H63.5M45.5 389.5H63.5M51.5 380.0V395.5M57.5 380.0V395.5" stroke="#555" stroke-width=".9"/><path d="M36 391.5H49M45.5 388L49.5 391.5L45.5 395" stroke="#1e88d8" stroke-width="1.2" fill="none"/><rect x="34.5" y="411.5" width="15" height="15" fill="#fafafa" stroke="#444"/><rect x="34.5" y="411.5" width="15" height="2.5" fill="#777"/><path d="M34.5 418.5H49.5M34.5 423.5H49.5M39.5 414.0V426.5M44.5 414.0V426.5" stroke="#555" stroke-width=".9"/><path d="M43 429L44 425L52 417L54 419L46 427Z" fill="#1e88d8" stroke="#fff" stroke-width=".6"/><path d="M36.5 444.5H45.5L49.5 448.5V458.5H36.5Z" fill="#fff" stroke="#444" stroke-width="1" stroke-linejoin="miter"/><path d="M45.5 444.5V448.5H49.5" stroke="#444" stroke-width="1"/><rect x="40" y="449" width="12" height="11" fill="#fff"/><polygon points="50.50,455.00 48.18,456.55 48.00,459.33 45.50,458.10 43.00,459.33 42.82,456.55 40.50,455.00 42.82,453.45 43.00,450.67 45.50,451.90 48.00,450.67 48.18,453.45" fill="#1e88d8"/><circle cx="45.5" cy="455" r="1.50" fill="#fff"/><rect x="36.5" y="470.5" width="11" height="14" fill="#fff" stroke="#444"/><rect x="39" y="474" width="2.3" height="2.3" fill="none" stroke="#555" stroke-width=".8"/><rect x="39" y="479" width="2.3" height="2.3" fill="none" stroke="#555" stroke-width=".8"/><path d="M43 475.2H45M43 480.2H45" stroke="#555"/><path d="M219.5 123.5L225 129L219.5 134.5" stroke="#333" stroke-width="1.1" fill="none"/><path d="M219.5 165.5L225 171L219.5 176.5" stroke="#333" stroke-width="1.1" fill="none"/><path d="M219.5 207.5L225 213L219.5 218.5" stroke="#333" stroke-width="1.1" fill="none"/><path d="M219.5 249.5L225 255L219.5 260.5" stroke="#333" stroke-width="1.1" fill="none"/><path d="M219.5 291.5L225 297L219.5 302.5" stroke="#333" stroke-width="1.1" fill="none"/><path d="M219.5 333.5L225 339L219.5 344.5" stroke="#333" stroke-width="1.1" fill="none"/><path d="M219.5 377.5L225 383L219.5 388.5" stroke="#333" stroke-width="1.1" fill="none"/></svg>
<div style="left:233px;top:407px;width:212px;height:74px;background:#fff;border:1px solid #c8c8c8;box-sizing:border-box;box-shadow:1px 1px 3px rgba(0,0,0,.15)"></div>
<div class="t" style="left:245px;top:412.5px;line-height:15px;font-size:11px;color:#505050;font-weight:700;">Spustiť editor Power Query</div>
<div class="t" style="left:245px;top:431.0px;line-height:16px;font-size:11.7px;color:#505050;font-weight:400;">Otvorte okno editora Power Query,</div>
<div class="t" style="left:245px;top:444.0px;line-height:16px;font-size:11.7px;color:#505050;font-weight:400;">kde môžete vytvárať alebo upravovať</div>
<div class="t" style="left:245px;top:457.0px;line-height:16px;font-size:11.7px;color:#505050;font-weight:400;">dotazy.</div>
<div style="left:4px;top:27px;width:73px;height:91px;border:5px solid #ff0000;box-sizing:border-box"></div>
<div style="left:405px;top:0px;width:66px;height:41px;border:5px solid #ff0000;box-sizing:border-box"></div>
<div style="left:6px;top:396px;width:232px;height:49px;border:5px solid #ff0000;box-sizing:border-box"></div>
</body></html>
